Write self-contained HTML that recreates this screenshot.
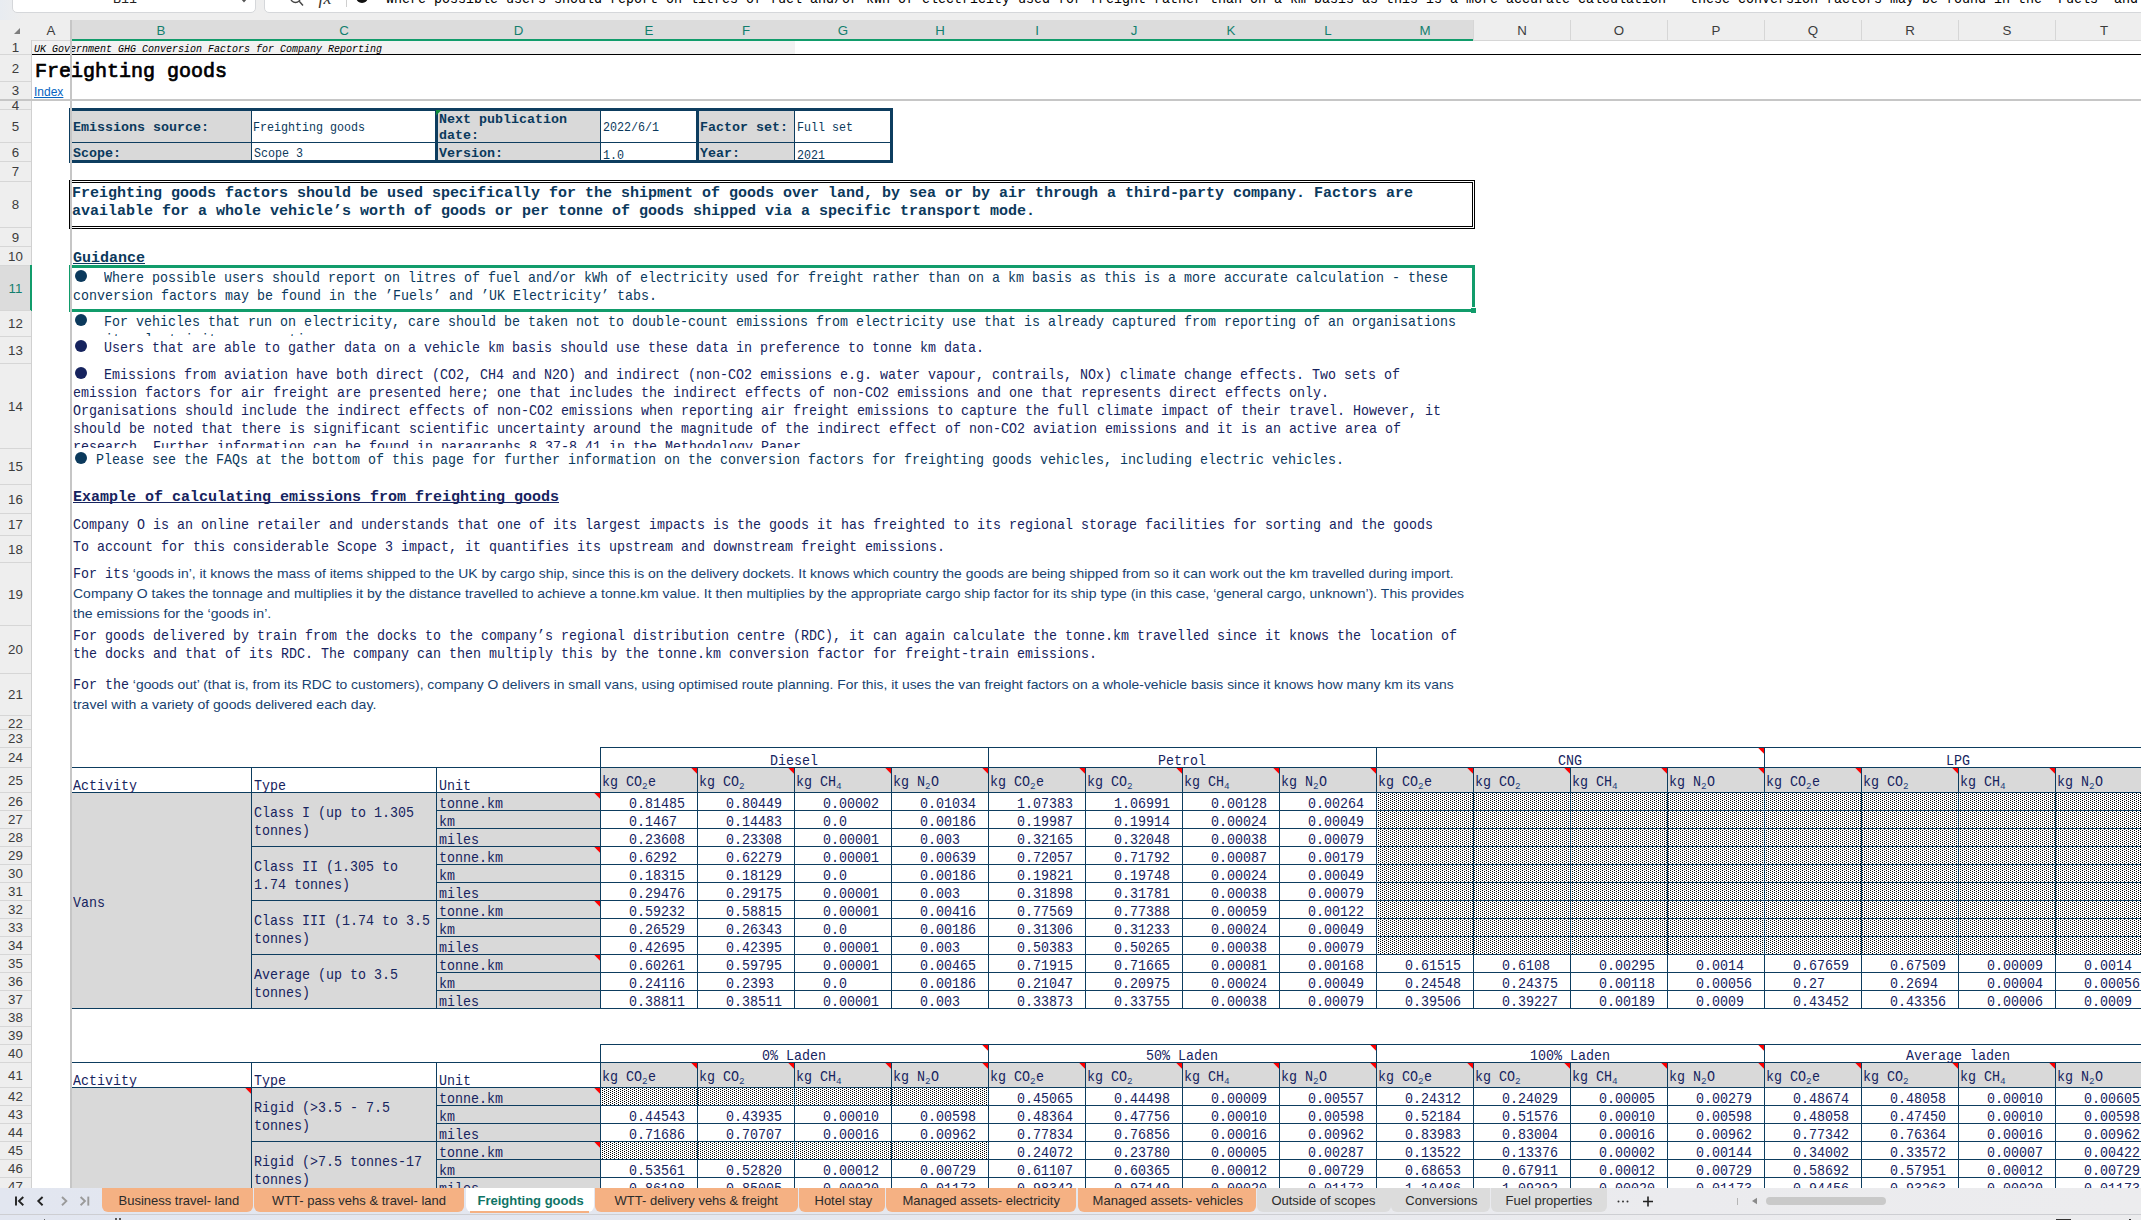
<!DOCTYPE html>
<html><head><meta charset="utf-8"><title>Freighting goods</title>
<style>
html,body{margin:0;padding:0;}
body{width:2141px;height:1220px;overflow:hidden;background:#fff;position:relative;font-family:"Liberation Sans",sans-serif;}
#root{position:absolute;left:0;top:0;width:2141px;height:1220px;overflow:hidden;background:#fff;}
#root div,#root span,#root svg{position:absolute;}
.m{font-family:"Liberation Mono",monospace;white-space:pre;transform-origin:0 0;display:block;}
.s{font-family:"Liberation Sans",sans-serif;white-space:pre;transform-origin:0 0;display:block;}
</style></head><body><div id="root">

<svg width="0" height="0" style="left:0;top:0"><defs><pattern id="dots" width="4" height="2" patternUnits="userSpaceOnUse"><rect width="4" height="2" fill="#fff"/><rect x="2" y="0" width="1" height="1" fill="#000"/><rect x="0" y="1" width="1" height="1" fill="#000"/></pattern></defs></svg>
<div style="left:32px;top:41px;width:763px;height:13px;background:#f2f2f2;"></div>
<div style="left:32px;top:54px;width:2109px;height:1px;background:#000;"></div>
<span class="m " style="left:34.30px;top:44px;font-size:10px;line-height:11px;height:11px;color:#000;transform:scaleX(0.9998);font-style:italic;">UK Government GHG Conversion Factors for Company Reporting</span>
<span class="m " style="left:34.60px;top:60px;font-size:20px;line-height:23px;height:23px;color:#000;transform:scaleX(0.9998);-webkit-text-stroke:0.7px #000;">Freighting goods</span>
<span class="s" style="left:34.00px;top:85px;font-size:12px;line-height:14px;height:14px;color:#0563c1;text-decoration:underline;">Index</span>
<div style="left:72px;top:111px;width:179px;height:49px;background:#d9d9d9;"></div>
<div style="left:438px;top:111px;width:162px;height:49px;background:#d9d9d9;"></div>
<div style="left:699px;top:111px;width:95px;height:49px;background:#d9d9d9;"></div>
<div style="left:69px;top:108px;width:824px;height:3px;background:#0d3d5f;"></div>
<div style="left:69px;top:160px;width:824px;height:3px;background:#0d3d5f;"></div>
<div style="left:69px;top:108px;width:3px;height:55px;background:#0d3d5f;"></div>
<div style="left:435px;top:108px;width:3px;height:55px;background:#0d3d5f;"></div>
<div style="left:696px;top:108px;width:3px;height:55px;background:#0d3d5f;"></div>
<div style="left:890px;top:108px;width:3px;height:55px;background:#0d3d5f;"></div>
<div style="left:251px;top:111px;width:1px;height:49px;background:#0d3d5f;"></div>
<div style="left:600px;top:111px;width:1px;height:49px;background:#0d3d5f;"></div>
<div style="left:794px;top:111px;width:1px;height:49px;background:#0d3d5f;"></div>
<div style="left:72px;top:142px;width:818px;height:1px;background:#0d3d5f;"></div>
<svg style="left:436px;top:110px" width="6" height="6" viewBox="0 0 6 6"><path d="M0 0 H5.6 L0 5.6 Z" fill="#0f8a3c"/></svg>
<span class="m " style="left:72.60px;top:120px;font-size:13.33px;line-height:15px;height:15px;color:#0b395c;transform:scaleX(1.0001);font-weight:bold;">Emissions source:</span>
<span class="m " style="left:72.60px;top:146px;font-size:13.33px;line-height:15px;height:15px;color:#0b395c;transform:scaleX(1.0001);font-weight:bold;">Scope:</span>
<span class="m " style="left:438.60px;top:112px;font-size:13.33px;line-height:15px;height:15px;color:#0b395c;transform:scaleX(1.0001);font-weight:bold;">Next publication</span>
<span class="m " style="left:438.60px;top:128px;font-size:13.33px;line-height:15px;height:15px;color:#0b395c;transform:scaleX(1.0001);font-weight:bold;">date:</span>
<span class="m " style="left:438.60px;top:146px;font-size:13.33px;line-height:15px;height:15px;color:#0b395c;transform:scaleX(1.0001);font-weight:bold;">Version:</span>
<span class="m " style="left:699.60px;top:120px;font-size:13.33px;line-height:15px;height:15px;color:#0b395c;transform:scaleX(1.0001);font-weight:bold;">Factor set:</span>
<span class="m " style="left:699.60px;top:146px;font-size:13.33px;line-height:15px;height:15px;color:#0b395c;transform:scaleX(1.0001);font-weight:bold;">Year:</span>
<span class="m " style="left:253.00px;top:120px;font-size:13px;line-height:15px;height:15px;color:#0b395c;transform:scaleX(0.8973);">Freighting goods</span>
<span class="m " style="left:253.60px;top:146px;font-size:13px;line-height:15px;height:15px;color:#0b395c;transform:scaleX(0.8973);">Scope 3</span>
<span class="m " style="left:602.90px;top:120px;font-size:13px;line-height:15px;height:15px;color:#0b395c;transform:scaleX(0.8973);">2022/6/1</span>
<span class="m " style="left:603.40px;top:148px;font-size:13px;line-height:15px;height:15px;color:#0b395c;transform:scaleX(0.8973);">1.0</span>
<span class="m " style="left:796.60px;top:120px;font-size:13px;line-height:15px;height:15px;color:#0b395c;transform:scaleX(0.8973);">Full set</span>
<span class="m " style="left:796.90px;top:148px;font-size:13px;line-height:15px;height:15px;color:#0b395c;transform:scaleX(0.8973);">2021</span>
<div style="left:69px;top:180px;width:1406px;height:1px;background:#000;"></div>
<div style="left:71px;top:182px;width:1402px;height:1px;background:#000;"></div>
<div style="left:71px;top:226px;width:1402px;height:1px;background:#000;"></div>
<div style="left:69px;top:228px;width:1406px;height:1px;background:#000;"></div>
<div style="left:69px;top:180px;width:1px;height:49px;background:#000;"></div>
<div style="left:71px;top:182px;width:1px;height:45px;background:#000;"></div>
<div style="left:1472px;top:182px;width:1px;height:45px;background:#000;"></div>
<div style="left:1474px;top:180px;width:1px;height:49px;background:#000;"></div>
<span class="m " style="left:72.40px;top:185px;font-size:15px;line-height:17px;height:17px;color:#0b395c;transform:scaleX(0.9998);font-weight:bold;">Freighting goods factors should be used specifically for the shipment of goods over land, by sea or by air through a third-party company. Factors are</span>
<span class="m " style="left:72.40px;top:203px;font-size:15px;line-height:17px;height:17px;color:#0b395c;transform:scaleX(0.9998);font-weight:bold;">available for a whole vehicle’s worth of goods or per tonne of goods shipped via a specific transport mode.</span>
<span class="m " style="left:72.60px;top:250px;font-size:15px;line-height:17px;height:17px;color:#0b395c;transform:scaleX(0.9998);font-weight:bold;">Guidance</span>
<div style="left:72.6px;top:263px;width:72px;height:1px;background:#0b395c;"></div>
<svg style="left:74px;top:269px" width="14" height="14" viewBox="0 0 14 14"><circle cx="7" cy="7" r="6.0" fill="#0b395c"/></svg>
<span class="m " style="left:103.70px;top:270px;font-size:15px;line-height:17px;height:17px;color:#0b395c;transform:scaleX(0.8887);">Where possible users should report on litres of fuel and/or kWh of electricity used for freight rather than on a km basis as this is a more accurate calculation - these</span>
<span class="m " style="left:72.50px;top:288px;font-size:15px;line-height:17px;height:17px;color:#0b395c;transform:scaleX(0.8887);">conversion factors may be found in the ’Fuels’ and ’UK Electricity’ tabs.</span>
<svg style="left:74px;top:313px" width="14" height="14" viewBox="0 0 14 14"><circle cx="7" cy="7" r="6.0" fill="#0b395c"/></svg>
<span class="m " style="left:103.70px;top:314px;font-size:15px;line-height:17px;height:17px;color:#0b395c;transform:scaleX(0.8887);">For vehicles that run on electricity, care should be taken not to double-count emissions from electricity use that is already captured from reporting of an organisations</span>
<div style="left:72px;top:328px;width:1400px;height:8px;overflow:hidden">
<span class="m " style="left:0.50px;top:4px;font-size:15px;line-height:17px;height:17px;color:#0b395c;transform:scaleX(0.8887);">on site electricity consumption.</span>
</div>
<svg style="left:74px;top:339px" width="14" height="14" viewBox="0 0 14 14"><circle cx="7" cy="7" r="6.0" fill="#16235e"/></svg>
<span class="m " style="left:103.70px;top:340px;font-size:15px;line-height:17px;height:17px;color:#16235e;transform:scaleX(0.8887);">Users that are able to gather data on a vehicle km basis should use these data in preference to tonne km data.</span>
<svg style="left:74px;top:366px" width="14" height="14" viewBox="0 0 14 14"><circle cx="7" cy="7" r="6.0" fill="#16235e"/></svg>
<span class="m " style="left:103.70px;top:367px;font-size:15px;line-height:17px;height:17px;color:#16235e;transform:scaleX(0.8887);">Emissions from aviation have both direct (CO2, CH4 and N2O) and indirect (non-CO2 emissions e.g. water vapour, contrails, NOx) climate change effects. Two sets of</span>
<span class="m " style="left:72.50px;top:385px;font-size:15px;line-height:17px;height:17px;color:#16235e;transform:scaleX(0.8887);">emission factors for air freight are presented here; one that includes the indirect effects of non-CO2 emissions and one that represents direct effects only.</span>
<span class="m " style="left:72.50px;top:403px;font-size:15px;line-height:17px;height:17px;color:#16235e;transform:scaleX(0.8887);">Organisations should include the indirect effects of non-CO2 emissions when reporting air freight emissions to capture the full climate impact of their travel. However, it</span>
<span class="m " style="left:72.50px;top:421px;font-size:15px;line-height:17px;height:17px;color:#16235e;transform:scaleX(0.8887);">should be noted that there is significant scientific uncertainty around the magnitude of the indirect effect of non-CO2 aviation emissions and it is an active area of</span>
<div style="left:72px;top:436px;width:1400px;height:12px;overflow:hidden">
<span class="m " style="left:0.50px;top:3px;font-size:15px;line-height:17px;height:17px;color:#16235e;transform:scaleX(0.8887);">research. Further information can be found in paragraphs 8.37-8.41 in the Methodology Paper.</span>
</div>
<svg style="left:74px;top:451px" width="14" height="14" viewBox="0 0 14 14"><circle cx="7" cy="7" r="6.0" fill="#0b395c"/></svg>
<span class="m " style="left:95.70px;top:452px;font-size:15px;line-height:17px;height:17px;color:#0b395c;transform:scaleX(0.8887);">Please see the FAQs at the bottom of this page for further information on the conversion factors for freighting goods vehicles, including electric vehicles.</span>
<span class="m " style="left:72.60px;top:489px;font-size:15px;line-height:17px;height:17px;color:#16235e;transform:scaleX(0.9998);font-weight:bold;">Example of calculating emissions from freighting goods</span>
<div style="left:72.6px;top:502px;width:486px;height:1px;background:#16235e;"></div>
<span class="m " style="left:72.50px;top:517px;font-size:15px;line-height:17px;height:17px;color:#16235e;transform:scaleX(0.8887);">Company O is an online retailer and understands that one of its largest impacts is the goods it has freighted to its regional storage facilities for sorting and the goods</span>
<span class="m " style="left:72.50px;top:539px;font-size:15px;line-height:17px;height:17px;color:#16235e;transform:scaleX(0.8887);">To account for this considerable Scope 3 impact, it quantifies its upstream and downstream freight emissions.</span>
<span class="m " style="left:72.50px;top:566px;font-size:15px;line-height:17px;height:17px;color:#16235e;transform:scaleX(0.8887);">For its</span>
<span class="s" style="left:129.00px;top:566px;font-size:13.5px;line-height:15px;height:15px;color:#17426f;transform:scaleX(1.0324);"> ‘goods in’, it knows the mass of items shipped to the UK by cargo ship, since this is on the delivery dockets. It knows which country the goods are being shipped from so it can work out the km travelled during import.</span>
<span class="s" style="left:72.60px;top:586px;font-size:13.5px;line-height:15px;height:15px;color:#17426f;transform:scaleX(1.0364);">Company O takes the tonnage and multiplies it by the distance travelled to achieve a tonne.km value. It then multiplies by the appropriate cargo ship factor for its ship type (in this case, ‘general cargo, unknown’). This provides</span>
<span class="s" style="left:72.60px;top:606px;font-size:13.5px;line-height:15px;height:15px;color:#17426f;transform:scaleX(1.0482);">the emissions for the ‘goods in’.</span>
<span class="m " style="left:72.50px;top:628px;font-size:15px;line-height:17px;height:17px;color:#16235e;transform:scaleX(0.8887);">For goods delivered by train from the docks to the company’s regional distribution centre (RDC), it can again calculate the tonne.km travelled since it knows the location of</span>
<span class="m " style="left:72.50px;top:646px;font-size:15px;line-height:17px;height:17px;color:#16235e;transform:scaleX(0.8887);">the docks and that of its RDC. The company can then multiply this by the tonne.km conversion factor for freight-train emissions.</span>
<span class="m " style="left:72.50px;top:677px;font-size:15px;line-height:17px;height:17px;color:#16235e;transform:scaleX(0.8887);">For the</span>
<span class="s" style="left:129.00px;top:677px;font-size:13.5px;line-height:15px;height:15px;color:#17426f;transform:scaleX(1.0268);"> ‘goods out’ (that is, from its RDC to customers), company O delivers in small vans, using optimised route planning. For this, it uses the van freight factors on a whole-vehicle basis since it knows how many km its vans</span>
<span class="s" style="left:72.60px;top:697px;font-size:13.5px;line-height:15px;height:15px;color:#17426f;transform:scaleX(1.0427);">travel with a variety of goods delivered each day.</span>
<div style="left:72px;top:793px;width:364px;height:215px;background:#d9d9d9;"></div>
<div style="left:437px;top:793px;width:163px;height:215px;background:#d9d9d9;"></div>
<div style="left:601px;top:768px;width:96px;height:24px;background:#d9d9d9;"></div>
<svg style="left:691px;top:768px" width="6" height="6" viewBox="0 0 6 6"><path d="M0.3 0 H6 V5.7 Z" fill="#ff0000"/></svg>
<div style="left:698px;top:768px;width:96px;height:24px;background:#d9d9d9;"></div>
<svg style="left:788px;top:768px" width="6" height="6" viewBox="0 0 6 6"><path d="M0.3 0 H6 V5.7 Z" fill="#ff0000"/></svg>
<div style="left:795px;top:768px;width:96px;height:24px;background:#d9d9d9;"></div>
<svg style="left:885px;top:768px" width="6" height="6" viewBox="0 0 6 6"><path d="M0.3 0 H6 V5.7 Z" fill="#ff0000"/></svg>
<div style="left:892px;top:768px;width:96px;height:24px;background:#d9d9d9;"></div>
<svg style="left:982px;top:768px" width="6" height="6" viewBox="0 0 6 6"><path d="M0.3 0 H6 V5.7 Z" fill="#ff0000"/></svg>
<div style="left:989px;top:768px;width:96px;height:24px;background:#d9d9d9;"></div>
<svg style="left:1079px;top:768px" width="6" height="6" viewBox="0 0 6 6"><path d="M0.3 0 H6 V5.7 Z" fill="#ff0000"/></svg>
<div style="left:1086px;top:768px;width:96px;height:24px;background:#d9d9d9;"></div>
<svg style="left:1176px;top:768px" width="6" height="6" viewBox="0 0 6 6"><path d="M0.3 0 H6 V5.7 Z" fill="#ff0000"/></svg>
<div style="left:1183px;top:768px;width:96px;height:24px;background:#d9d9d9;"></div>
<svg style="left:1273px;top:768px" width="6" height="6" viewBox="0 0 6 6"><path d="M0.3 0 H6 V5.7 Z" fill="#ff0000"/></svg>
<div style="left:1280px;top:768px;width:96px;height:24px;background:#d9d9d9;"></div>
<svg style="left:1370px;top:768px" width="6" height="6" viewBox="0 0 6 6"><path d="M0.3 0 H6 V5.7 Z" fill="#ff0000"/></svg>
<div style="left:1377px;top:768px;width:96px;height:24px;background:#d9d9d9;"></div>
<svg style="left:1467px;top:768px" width="6" height="6" viewBox="0 0 6 6"><path d="M0.3 0 H6 V5.7 Z" fill="#ff0000"/></svg>
<div style="left:1474px;top:768px;width:96px;height:24px;background:#d9d9d9;"></div>
<svg style="left:1564px;top:768px" width="6" height="6" viewBox="0 0 6 6"><path d="M0.3 0 H6 V5.7 Z" fill="#ff0000"/></svg>
<div style="left:1571px;top:768px;width:96px;height:24px;background:#d9d9d9;"></div>
<svg style="left:1661px;top:768px" width="6" height="6" viewBox="0 0 6 6"><path d="M0.3 0 H6 V5.7 Z" fill="#ff0000"/></svg>
<div style="left:1668px;top:768px;width:96px;height:24px;background:#d9d9d9;"></div>
<svg style="left:1758px;top:768px" width="6" height="6" viewBox="0 0 6 6"><path d="M0.3 0 H6 V5.7 Z" fill="#ff0000"/></svg>
<div style="left:1765px;top:768px;width:96px;height:24px;background:#d9d9d9;"></div>
<svg style="left:1855px;top:768px" width="6" height="6" viewBox="0 0 6 6"><path d="M0.3 0 H6 V5.7 Z" fill="#ff0000"/></svg>
<div style="left:1862px;top:768px;width:96px;height:24px;background:#d9d9d9;"></div>
<svg style="left:1952px;top:768px" width="6" height="6" viewBox="0 0 6 6"><path d="M0.3 0 H6 V5.7 Z" fill="#ff0000"/></svg>
<div style="left:1959px;top:768px;width:96px;height:24px;background:#d9d9d9;"></div>
<svg style="left:2049px;top:768px" width="6" height="6" viewBox="0 0 6 6"><path d="M0.3 0 H6 V5.7 Z" fill="#ff0000"/></svg>
<div style="left:2056px;top:768px;width:96px;height:24px;background:#d9d9d9;"></div>
<svg style="left:2146px;top:768px" width="6" height="6" viewBox="0 0 6 6"><path d="M0.3 0 H6 V5.7 Z" fill="#ff0000"/></svg>
<svg shape-rendering="crispEdges" style="left:1376px;top:792px" width="765" height="163" viewBox="0 0 765 163"><rect x="1" y="1" width="764" height="162" fill="url(#dots)"/></svg>
<div style="left:600px;top:747px;width:1541px;height:1px;background:#0d3d5f;"></div>
<div style="left:72px;top:767px;width:2069px;height:1px;background:#0d3d5f;"></div>
<div style="left:72px;top:792px;width:2069px;height:1px;background:#0d3d5f;"></div>
<div style="left:437px;top:810px;width:1704px;height:1px;background:#0d3d5f;"></div>
<div style="left:437px;top:828px;width:1704px;height:1px;background:#0d3d5f;"></div>
<div style="left:252px;top:846px;width:1889px;height:1px;background:#0d3d5f;"></div>
<div style="left:437px;top:864px;width:1704px;height:1px;background:#0d3d5f;"></div>
<div style="left:437px;top:882px;width:1704px;height:1px;background:#0d3d5f;"></div>
<div style="left:252px;top:900px;width:1889px;height:1px;background:#0d3d5f;"></div>
<div style="left:437px;top:918px;width:1704px;height:1px;background:#0d3d5f;"></div>
<div style="left:437px;top:936px;width:1704px;height:1px;background:#0d3d5f;"></div>
<div style="left:252px;top:954px;width:1889px;height:1px;background:#0d3d5f;"></div>
<div style="left:437px;top:972px;width:1704px;height:1px;background:#0d3d5f;"></div>
<div style="left:437px;top:990px;width:1704px;height:1px;background:#0d3d5f;"></div>
<div style="left:252px;top:1008px;width:1889px;height:1px;background:#0d3d5f;"></div>
<div style="left:72px;top:1008px;width:2069px;height:1px;background:#0d3d5f;"></div>
<div style="left:600px;top:747px;width:1px;height:262px;background:#0d3d5f;"></div>
<div style="left:988px;top:747px;width:1px;height:262px;background:#0d3d5f;"></div>
<div style="left:1376px;top:747px;width:1px;height:262px;background:#0d3d5f;"></div>
<div style="left:1764px;top:747px;width:1px;height:262px;background:#0d3d5f;"></div>
<div style="left:697px;top:767px;width:1px;height:242px;background:#0d3d5f;"></div>
<div style="left:794px;top:767px;width:1px;height:242px;background:#0d3d5f;"></div>
<div style="left:891px;top:767px;width:1px;height:242px;background:#0d3d5f;"></div>
<div style="left:1085px;top:767px;width:1px;height:242px;background:#0d3d5f;"></div>
<div style="left:1182px;top:767px;width:1px;height:242px;background:#0d3d5f;"></div>
<div style="left:1279px;top:767px;width:1px;height:242px;background:#0d3d5f;"></div>
<div style="left:1473px;top:767px;width:1px;height:242px;background:#0d3d5f;"></div>
<div style="left:1570px;top:767px;width:1px;height:242px;background:#0d3d5f;"></div>
<div style="left:1667px;top:767px;width:1px;height:242px;background:#0d3d5f;"></div>
<div style="left:1861px;top:767px;width:1px;height:242px;background:#0d3d5f;"></div>
<div style="left:1958px;top:767px;width:1px;height:242px;background:#0d3d5f;"></div>
<div style="left:2055px;top:767px;width:1px;height:242px;background:#0d3d5f;"></div>
<div style="left:251px;top:767px;width:1px;height:242px;background:#0d3d5f;"></div>
<div style="left:436px;top:767px;width:1px;height:242px;background:#0d3d5f;"></div>
<span class="m " style="left:600.00px;top:753px;font-size:15px;line-height:17px;height:17px;color:#16235e;transform:scaleX(0.8887);width:436.57px;text-align:center;transform-origin:0 0;">Diesel</span>
<span class="m " style="left:988.00px;top:753px;font-size:15px;line-height:17px;height:17px;color:#16235e;transform:scaleX(0.8887);width:436.57px;text-align:center;transform-origin:0 0;">Petrol</span>
<span class="m " style="left:1376.00px;top:753px;font-size:15px;line-height:17px;height:17px;color:#16235e;transform:scaleX(0.8887);width:436.57px;text-align:center;transform-origin:0 0;">CNG</span>
<span class="m " style="left:1764.00px;top:753px;font-size:15px;line-height:17px;height:17px;color:#16235e;transform:scaleX(0.8887);width:436.57px;text-align:center;transform-origin:0 0;">LPG</span>
<svg style="left:1758px;top:748px" width="6" height="6" viewBox="0 0 6 6"><path d="M0.3 0 H6 V5.7 Z" fill="#ff0000"/></svg>
<span class="m " style="left:73.30px;top:778px;font-size:15px;line-height:17px;height:17px;color:#16235e;transform:scaleX(0.8887);">Activity</span>
<span class="m " style="left:253.60px;top:778px;font-size:15px;line-height:17px;height:17px;color:#16235e;transform:scaleX(0.8887);">Type</span>
<span class="m " style="left:438.60px;top:778px;font-size:15px;line-height:17px;height:17px;color:#16235e;transform:scaleX(0.8887);">Unit</span>
<span class="m " style="left:602.00px;top:774px;font-size:15px;line-height:17px;height:17px;color:#16235e;transform:scaleX(0.8887);">kg CO</span>
<span class="m " style="left:642.30px;top:781px;font-size:9.6px;line-height:11px;height:11px;color:#1f3f7a;transform:scaleX(0.9721);">2</span>
<span class="m " style="left:648.00px;top:774px;font-size:15px;line-height:17px;height:17px;color:#16235e;transform:scaleX(0.8887);">e</span>
<span class="m " style="left:699.00px;top:774px;font-size:15px;line-height:17px;height:17px;color:#16235e;transform:scaleX(0.8887);">kg CO</span>
<span class="m " style="left:739.30px;top:781px;font-size:9.6px;line-height:11px;height:11px;color:#1f3f7a;transform:scaleX(0.9721);">2</span>
<span class="m " style="left:796.00px;top:774px;font-size:15px;line-height:17px;height:17px;color:#16235e;transform:scaleX(0.8887);">kg CH</span>
<span class="m " style="left:836.30px;top:781px;font-size:9.6px;line-height:11px;height:11px;color:#1f3f7a;transform:scaleX(0.9721);">4</span>
<span class="m " style="left:893.00px;top:774px;font-size:15px;line-height:17px;height:17px;color:#16235e;transform:scaleX(0.8887);">kg N</span>
<span class="m " style="left:925.30px;top:781px;font-size:9.6px;line-height:11px;height:11px;color:#1f3f7a;transform:scaleX(0.9721);">2</span>
<span class="m " style="left:931.00px;top:774px;font-size:15px;line-height:17px;height:17px;color:#16235e;transform:scaleX(0.8887);">O</span>
<span class="m " style="left:990.00px;top:774px;font-size:15px;line-height:17px;height:17px;color:#16235e;transform:scaleX(0.8887);">kg CO</span>
<span class="m " style="left:1030.30px;top:781px;font-size:9.6px;line-height:11px;height:11px;color:#1f3f7a;transform:scaleX(0.9721);">2</span>
<span class="m " style="left:1036.00px;top:774px;font-size:15px;line-height:17px;height:17px;color:#16235e;transform:scaleX(0.8887);">e</span>
<span class="m " style="left:1087.00px;top:774px;font-size:15px;line-height:17px;height:17px;color:#16235e;transform:scaleX(0.8887);">kg CO</span>
<span class="m " style="left:1127.30px;top:781px;font-size:9.6px;line-height:11px;height:11px;color:#1f3f7a;transform:scaleX(0.9721);">2</span>
<span class="m " style="left:1184.00px;top:774px;font-size:15px;line-height:17px;height:17px;color:#16235e;transform:scaleX(0.8887);">kg CH</span>
<span class="m " style="left:1224.30px;top:781px;font-size:9.6px;line-height:11px;height:11px;color:#1f3f7a;transform:scaleX(0.9721);">4</span>
<span class="m " style="left:1281.00px;top:774px;font-size:15px;line-height:17px;height:17px;color:#16235e;transform:scaleX(0.8887);">kg N</span>
<span class="m " style="left:1313.30px;top:781px;font-size:9.6px;line-height:11px;height:11px;color:#1f3f7a;transform:scaleX(0.9721);">2</span>
<span class="m " style="left:1319.00px;top:774px;font-size:15px;line-height:17px;height:17px;color:#16235e;transform:scaleX(0.8887);">O</span>
<span class="m " style="left:1378.00px;top:774px;font-size:15px;line-height:17px;height:17px;color:#16235e;transform:scaleX(0.8887);">kg CO</span>
<span class="m " style="left:1418.30px;top:781px;font-size:9.6px;line-height:11px;height:11px;color:#1f3f7a;transform:scaleX(0.9721);">2</span>
<span class="m " style="left:1424.00px;top:774px;font-size:15px;line-height:17px;height:17px;color:#16235e;transform:scaleX(0.8887);">e</span>
<span class="m " style="left:1475.00px;top:774px;font-size:15px;line-height:17px;height:17px;color:#16235e;transform:scaleX(0.8887);">kg CO</span>
<span class="m " style="left:1515.30px;top:781px;font-size:9.6px;line-height:11px;height:11px;color:#1f3f7a;transform:scaleX(0.9721);">2</span>
<span class="m " style="left:1572.00px;top:774px;font-size:15px;line-height:17px;height:17px;color:#16235e;transform:scaleX(0.8887);">kg CH</span>
<span class="m " style="left:1612.30px;top:781px;font-size:9.6px;line-height:11px;height:11px;color:#1f3f7a;transform:scaleX(0.9721);">4</span>
<span class="m " style="left:1669.00px;top:774px;font-size:15px;line-height:17px;height:17px;color:#16235e;transform:scaleX(0.8887);">kg N</span>
<span class="m " style="left:1701.30px;top:781px;font-size:9.6px;line-height:11px;height:11px;color:#1f3f7a;transform:scaleX(0.9721);">2</span>
<span class="m " style="left:1707.00px;top:774px;font-size:15px;line-height:17px;height:17px;color:#16235e;transform:scaleX(0.8887);">O</span>
<span class="m " style="left:1766.00px;top:774px;font-size:15px;line-height:17px;height:17px;color:#16235e;transform:scaleX(0.8887);">kg CO</span>
<span class="m " style="left:1806.30px;top:781px;font-size:9.6px;line-height:11px;height:11px;color:#1f3f7a;transform:scaleX(0.9721);">2</span>
<span class="m " style="left:1812.00px;top:774px;font-size:15px;line-height:17px;height:17px;color:#16235e;transform:scaleX(0.8887);">e</span>
<span class="m " style="left:1863.00px;top:774px;font-size:15px;line-height:17px;height:17px;color:#16235e;transform:scaleX(0.8887);">kg CO</span>
<span class="m " style="left:1903.30px;top:781px;font-size:9.6px;line-height:11px;height:11px;color:#1f3f7a;transform:scaleX(0.9721);">2</span>
<span class="m " style="left:1960.00px;top:774px;font-size:15px;line-height:17px;height:17px;color:#16235e;transform:scaleX(0.8887);">kg CH</span>
<span class="m " style="left:2000.30px;top:781px;font-size:9.6px;line-height:11px;height:11px;color:#1f3f7a;transform:scaleX(0.9721);">4</span>
<span class="m " style="left:2057.00px;top:774px;font-size:15px;line-height:17px;height:17px;color:#16235e;transform:scaleX(0.8887);">kg N</span>
<span class="m " style="left:2089.30px;top:781px;font-size:9.6px;line-height:11px;height:11px;color:#1f3f7a;transform:scaleX(0.9721);">2</span>
<span class="m " style="left:2095.00px;top:774px;font-size:15px;line-height:17px;height:17px;color:#16235e;transform:scaleX(0.8887);">O</span>
<span class="m " style="left:73.30px;top:895px;font-size:15px;line-height:17px;height:17px;color:#16235e;transform:scaleX(0.8887);">Vans</span>
<span class="m " style="left:253.60px;top:805px;font-size:15px;line-height:17px;height:17px;color:#16235e;transform:scaleX(0.8887);">Class I (up to 1.305</span>
<span class="m " style="left:253.60px;top:823px;font-size:15px;line-height:17px;height:17px;color:#16235e;transform:scaleX(0.8887);">tonnes)</span>
<span class="m " style="left:253.60px;top:859px;font-size:15px;line-height:17px;height:17px;color:#16235e;transform:scaleX(0.8887);">Class II (1.305 to</span>
<span class="m " style="left:253.60px;top:877px;font-size:15px;line-height:17px;height:17px;color:#16235e;transform:scaleX(0.8887);">1.74 tonnes)</span>
<span class="m " style="left:253.60px;top:913px;font-size:15px;line-height:17px;height:17px;color:#16235e;transform:scaleX(0.8887);">Class III (1.74 to 3.5</span>
<span class="m " style="left:253.60px;top:931px;font-size:15px;line-height:17px;height:17px;color:#16235e;transform:scaleX(0.8887);">tonnes)</span>
<span class="m " style="left:253.60px;top:967px;font-size:15px;line-height:17px;height:17px;color:#16235e;transform:scaleX(0.8887);">Average (up to 3.5</span>
<span class="m " style="left:253.60px;top:985px;font-size:15px;line-height:17px;height:17px;color:#16235e;transform:scaleX(0.8887);">tonnes)</span>
<span class="m " style="left:438.60px;top:796px;font-size:15px;line-height:17px;height:17px;color:#16235e;transform:scaleX(0.8887);">tonne.km</span>
<svg style="left:594px;top:793px" width="6" height="6" viewBox="0 0 6 6"><path d="M0.3 0 H6 V5.7 Z" fill="#ff0000"/></svg>
<span class="m " style="left:629.10px;top:796px;font-size:15px;line-height:17px;height:17px;color:#16235e;transform:scaleX(0.8887);">0.81485</span>
<span class="m " style="left:726.10px;top:796px;font-size:15px;line-height:17px;height:17px;color:#16235e;transform:scaleX(0.8887);">0.80449</span>
<span class="m " style="left:823.10px;top:796px;font-size:15px;line-height:17px;height:17px;color:#16235e;transform:scaleX(0.8887);">0.00002</span>
<span class="m " style="left:920.10px;top:796px;font-size:15px;line-height:17px;height:17px;color:#16235e;transform:scaleX(0.8887);">0.01034</span>
<span class="m " style="left:1017.10px;top:796px;font-size:15px;line-height:17px;height:17px;color:#16235e;transform:scaleX(0.8887);">1.07383</span>
<span class="m " style="left:1114.10px;top:796px;font-size:15px;line-height:17px;height:17px;color:#16235e;transform:scaleX(0.8887);">1.06991</span>
<span class="m " style="left:1211.10px;top:796px;font-size:15px;line-height:17px;height:17px;color:#16235e;transform:scaleX(0.8887);">0.00128</span>
<span class="m " style="left:1308.10px;top:796px;font-size:15px;line-height:17px;height:17px;color:#16235e;transform:scaleX(0.8887);">0.00264</span>
<span class="m " style="left:438.60px;top:814px;font-size:15px;line-height:17px;height:17px;color:#16235e;transform:scaleX(0.8887);">km</span>
<span class="m " style="left:629.10px;top:814px;font-size:15px;line-height:17px;height:17px;color:#16235e;transform:scaleX(0.8887);">0.1467</span>
<span class="m " style="left:726.10px;top:814px;font-size:15px;line-height:17px;height:17px;color:#16235e;transform:scaleX(0.8887);">0.14483</span>
<span class="m " style="left:823.10px;top:814px;font-size:15px;line-height:17px;height:17px;color:#16235e;transform:scaleX(0.8887);">0.0</span>
<span class="m " style="left:920.10px;top:814px;font-size:15px;line-height:17px;height:17px;color:#16235e;transform:scaleX(0.8887);">0.00186</span>
<span class="m " style="left:1017.10px;top:814px;font-size:15px;line-height:17px;height:17px;color:#16235e;transform:scaleX(0.8887);">0.19987</span>
<span class="m " style="left:1114.10px;top:814px;font-size:15px;line-height:17px;height:17px;color:#16235e;transform:scaleX(0.8887);">0.19914</span>
<span class="m " style="left:1211.10px;top:814px;font-size:15px;line-height:17px;height:17px;color:#16235e;transform:scaleX(0.8887);">0.00024</span>
<span class="m " style="left:1308.10px;top:814px;font-size:15px;line-height:17px;height:17px;color:#16235e;transform:scaleX(0.8887);">0.00049</span>
<span class="m " style="left:438.60px;top:832px;font-size:15px;line-height:17px;height:17px;color:#16235e;transform:scaleX(0.8887);">miles</span>
<span class="m " style="left:629.10px;top:832px;font-size:15px;line-height:17px;height:17px;color:#16235e;transform:scaleX(0.8887);">0.23608</span>
<span class="m " style="left:726.10px;top:832px;font-size:15px;line-height:17px;height:17px;color:#16235e;transform:scaleX(0.8887);">0.23308</span>
<span class="m " style="left:823.10px;top:832px;font-size:15px;line-height:17px;height:17px;color:#16235e;transform:scaleX(0.8887);">0.00001</span>
<span class="m " style="left:920.10px;top:832px;font-size:15px;line-height:17px;height:17px;color:#16235e;transform:scaleX(0.8887);">0.003</span>
<span class="m " style="left:1017.10px;top:832px;font-size:15px;line-height:17px;height:17px;color:#16235e;transform:scaleX(0.8887);">0.32165</span>
<span class="m " style="left:1114.10px;top:832px;font-size:15px;line-height:17px;height:17px;color:#16235e;transform:scaleX(0.8887);">0.32048</span>
<span class="m " style="left:1211.10px;top:832px;font-size:15px;line-height:17px;height:17px;color:#16235e;transform:scaleX(0.8887);">0.00038</span>
<span class="m " style="left:1308.10px;top:832px;font-size:15px;line-height:17px;height:17px;color:#16235e;transform:scaleX(0.8887);">0.00079</span>
<span class="m " style="left:438.60px;top:850px;font-size:15px;line-height:17px;height:17px;color:#16235e;transform:scaleX(0.8887);">tonne.km</span>
<svg style="left:594px;top:847px" width="6" height="6" viewBox="0 0 6 6"><path d="M0.3 0 H6 V5.7 Z" fill="#ff0000"/></svg>
<span class="m " style="left:629.10px;top:850px;font-size:15px;line-height:17px;height:17px;color:#16235e;transform:scaleX(0.8887);">0.6292</span>
<span class="m " style="left:726.10px;top:850px;font-size:15px;line-height:17px;height:17px;color:#16235e;transform:scaleX(0.8887);">0.62279</span>
<span class="m " style="left:823.10px;top:850px;font-size:15px;line-height:17px;height:17px;color:#16235e;transform:scaleX(0.8887);">0.00001</span>
<span class="m " style="left:920.10px;top:850px;font-size:15px;line-height:17px;height:17px;color:#16235e;transform:scaleX(0.8887);">0.00639</span>
<span class="m " style="left:1017.10px;top:850px;font-size:15px;line-height:17px;height:17px;color:#16235e;transform:scaleX(0.8887);">0.72057</span>
<span class="m " style="left:1114.10px;top:850px;font-size:15px;line-height:17px;height:17px;color:#16235e;transform:scaleX(0.8887);">0.71792</span>
<span class="m " style="left:1211.10px;top:850px;font-size:15px;line-height:17px;height:17px;color:#16235e;transform:scaleX(0.8887);">0.00087</span>
<span class="m " style="left:1308.10px;top:850px;font-size:15px;line-height:17px;height:17px;color:#16235e;transform:scaleX(0.8887);">0.00179</span>
<span class="m " style="left:438.60px;top:868px;font-size:15px;line-height:17px;height:17px;color:#16235e;transform:scaleX(0.8887);">km</span>
<span class="m " style="left:629.10px;top:868px;font-size:15px;line-height:17px;height:17px;color:#16235e;transform:scaleX(0.8887);">0.18315</span>
<span class="m " style="left:726.10px;top:868px;font-size:15px;line-height:17px;height:17px;color:#16235e;transform:scaleX(0.8887);">0.18129</span>
<span class="m " style="left:823.10px;top:868px;font-size:15px;line-height:17px;height:17px;color:#16235e;transform:scaleX(0.8887);">0.0</span>
<span class="m " style="left:920.10px;top:868px;font-size:15px;line-height:17px;height:17px;color:#16235e;transform:scaleX(0.8887);">0.00186</span>
<span class="m " style="left:1017.10px;top:868px;font-size:15px;line-height:17px;height:17px;color:#16235e;transform:scaleX(0.8887);">0.19821</span>
<span class="m " style="left:1114.10px;top:868px;font-size:15px;line-height:17px;height:17px;color:#16235e;transform:scaleX(0.8887);">0.19748</span>
<span class="m " style="left:1211.10px;top:868px;font-size:15px;line-height:17px;height:17px;color:#16235e;transform:scaleX(0.8887);">0.00024</span>
<span class="m " style="left:1308.10px;top:868px;font-size:15px;line-height:17px;height:17px;color:#16235e;transform:scaleX(0.8887);">0.00049</span>
<span class="m " style="left:438.60px;top:886px;font-size:15px;line-height:17px;height:17px;color:#16235e;transform:scaleX(0.8887);">miles</span>
<span class="m " style="left:629.10px;top:886px;font-size:15px;line-height:17px;height:17px;color:#16235e;transform:scaleX(0.8887);">0.29476</span>
<span class="m " style="left:726.10px;top:886px;font-size:15px;line-height:17px;height:17px;color:#16235e;transform:scaleX(0.8887);">0.29175</span>
<span class="m " style="left:823.10px;top:886px;font-size:15px;line-height:17px;height:17px;color:#16235e;transform:scaleX(0.8887);">0.00001</span>
<span class="m " style="left:920.10px;top:886px;font-size:15px;line-height:17px;height:17px;color:#16235e;transform:scaleX(0.8887);">0.003</span>
<span class="m " style="left:1017.10px;top:886px;font-size:15px;line-height:17px;height:17px;color:#16235e;transform:scaleX(0.8887);">0.31898</span>
<span class="m " style="left:1114.10px;top:886px;font-size:15px;line-height:17px;height:17px;color:#16235e;transform:scaleX(0.8887);">0.31781</span>
<span class="m " style="left:1211.10px;top:886px;font-size:15px;line-height:17px;height:17px;color:#16235e;transform:scaleX(0.8887);">0.00038</span>
<span class="m " style="left:1308.10px;top:886px;font-size:15px;line-height:17px;height:17px;color:#16235e;transform:scaleX(0.8887);">0.00079</span>
<span class="m " style="left:438.60px;top:904px;font-size:15px;line-height:17px;height:17px;color:#16235e;transform:scaleX(0.8887);">tonne.km</span>
<svg style="left:594px;top:901px" width="6" height="6" viewBox="0 0 6 6"><path d="M0.3 0 H6 V5.7 Z" fill="#ff0000"/></svg>
<span class="m " style="left:629.10px;top:904px;font-size:15px;line-height:17px;height:17px;color:#16235e;transform:scaleX(0.8887);">0.59232</span>
<span class="m " style="left:726.10px;top:904px;font-size:15px;line-height:17px;height:17px;color:#16235e;transform:scaleX(0.8887);">0.58815</span>
<span class="m " style="left:823.10px;top:904px;font-size:15px;line-height:17px;height:17px;color:#16235e;transform:scaleX(0.8887);">0.00001</span>
<span class="m " style="left:920.10px;top:904px;font-size:15px;line-height:17px;height:17px;color:#16235e;transform:scaleX(0.8887);">0.00416</span>
<span class="m " style="left:1017.10px;top:904px;font-size:15px;line-height:17px;height:17px;color:#16235e;transform:scaleX(0.8887);">0.77569</span>
<span class="m " style="left:1114.10px;top:904px;font-size:15px;line-height:17px;height:17px;color:#16235e;transform:scaleX(0.8887);">0.77388</span>
<span class="m " style="left:1211.10px;top:904px;font-size:15px;line-height:17px;height:17px;color:#16235e;transform:scaleX(0.8887);">0.00059</span>
<span class="m " style="left:1308.10px;top:904px;font-size:15px;line-height:17px;height:17px;color:#16235e;transform:scaleX(0.8887);">0.00122</span>
<span class="m " style="left:438.60px;top:922px;font-size:15px;line-height:17px;height:17px;color:#16235e;transform:scaleX(0.8887);">km</span>
<span class="m " style="left:629.10px;top:922px;font-size:15px;line-height:17px;height:17px;color:#16235e;transform:scaleX(0.8887);">0.26529</span>
<span class="m " style="left:726.10px;top:922px;font-size:15px;line-height:17px;height:17px;color:#16235e;transform:scaleX(0.8887);">0.26343</span>
<span class="m " style="left:823.10px;top:922px;font-size:15px;line-height:17px;height:17px;color:#16235e;transform:scaleX(0.8887);">0.0</span>
<span class="m " style="left:920.10px;top:922px;font-size:15px;line-height:17px;height:17px;color:#16235e;transform:scaleX(0.8887);">0.00186</span>
<span class="m " style="left:1017.10px;top:922px;font-size:15px;line-height:17px;height:17px;color:#16235e;transform:scaleX(0.8887);">0.31306</span>
<span class="m " style="left:1114.10px;top:922px;font-size:15px;line-height:17px;height:17px;color:#16235e;transform:scaleX(0.8887);">0.31233</span>
<span class="m " style="left:1211.10px;top:922px;font-size:15px;line-height:17px;height:17px;color:#16235e;transform:scaleX(0.8887);">0.00024</span>
<span class="m " style="left:1308.10px;top:922px;font-size:15px;line-height:17px;height:17px;color:#16235e;transform:scaleX(0.8887);">0.00049</span>
<span class="m " style="left:438.60px;top:940px;font-size:15px;line-height:17px;height:17px;color:#16235e;transform:scaleX(0.8887);">miles</span>
<span class="m " style="left:629.10px;top:940px;font-size:15px;line-height:17px;height:17px;color:#16235e;transform:scaleX(0.8887);">0.42695</span>
<span class="m " style="left:726.10px;top:940px;font-size:15px;line-height:17px;height:17px;color:#16235e;transform:scaleX(0.8887);">0.42395</span>
<span class="m " style="left:823.10px;top:940px;font-size:15px;line-height:17px;height:17px;color:#16235e;transform:scaleX(0.8887);">0.00001</span>
<span class="m " style="left:920.10px;top:940px;font-size:15px;line-height:17px;height:17px;color:#16235e;transform:scaleX(0.8887);">0.003</span>
<span class="m " style="left:1017.10px;top:940px;font-size:15px;line-height:17px;height:17px;color:#16235e;transform:scaleX(0.8887);">0.50383</span>
<span class="m " style="left:1114.10px;top:940px;font-size:15px;line-height:17px;height:17px;color:#16235e;transform:scaleX(0.8887);">0.50265</span>
<span class="m " style="left:1211.10px;top:940px;font-size:15px;line-height:17px;height:17px;color:#16235e;transform:scaleX(0.8887);">0.00038</span>
<span class="m " style="left:1308.10px;top:940px;font-size:15px;line-height:17px;height:17px;color:#16235e;transform:scaleX(0.8887);">0.00079</span>
<span class="m " style="left:438.60px;top:958px;font-size:15px;line-height:17px;height:17px;color:#16235e;transform:scaleX(0.8887);">tonne.km</span>
<svg style="left:594px;top:955px" width="6" height="6" viewBox="0 0 6 6"><path d="M0.3 0 H6 V5.7 Z" fill="#ff0000"/></svg>
<span class="m " style="left:629.10px;top:958px;font-size:15px;line-height:17px;height:17px;color:#16235e;transform:scaleX(0.8887);">0.60261</span>
<span class="m " style="left:726.10px;top:958px;font-size:15px;line-height:17px;height:17px;color:#16235e;transform:scaleX(0.8887);">0.59795</span>
<span class="m " style="left:823.10px;top:958px;font-size:15px;line-height:17px;height:17px;color:#16235e;transform:scaleX(0.8887);">0.00001</span>
<span class="m " style="left:920.10px;top:958px;font-size:15px;line-height:17px;height:17px;color:#16235e;transform:scaleX(0.8887);">0.00465</span>
<span class="m " style="left:1017.10px;top:958px;font-size:15px;line-height:17px;height:17px;color:#16235e;transform:scaleX(0.8887);">0.71915</span>
<span class="m " style="left:1114.10px;top:958px;font-size:15px;line-height:17px;height:17px;color:#16235e;transform:scaleX(0.8887);">0.71665</span>
<span class="m " style="left:1211.10px;top:958px;font-size:15px;line-height:17px;height:17px;color:#16235e;transform:scaleX(0.8887);">0.00081</span>
<span class="m " style="left:1308.10px;top:958px;font-size:15px;line-height:17px;height:17px;color:#16235e;transform:scaleX(0.8887);">0.00168</span>
<span class="m " style="left:1405.10px;top:958px;font-size:15px;line-height:17px;height:17px;color:#16235e;transform:scaleX(0.8887);">0.61515</span>
<span class="m " style="left:1502.10px;top:958px;font-size:15px;line-height:17px;height:17px;color:#16235e;transform:scaleX(0.8887);">0.6108</span>
<span class="m " style="left:1599.10px;top:958px;font-size:15px;line-height:17px;height:17px;color:#16235e;transform:scaleX(0.8887);">0.00295</span>
<span class="m " style="left:1696.10px;top:958px;font-size:15px;line-height:17px;height:17px;color:#16235e;transform:scaleX(0.8887);">0.0014</span>
<span class="m " style="left:1793.10px;top:958px;font-size:15px;line-height:17px;height:17px;color:#16235e;transform:scaleX(0.8887);">0.67659</span>
<span class="m " style="left:1890.10px;top:958px;font-size:15px;line-height:17px;height:17px;color:#16235e;transform:scaleX(0.8887);">0.67509</span>
<span class="m " style="left:1987.10px;top:958px;font-size:15px;line-height:17px;height:17px;color:#16235e;transform:scaleX(0.8887);">0.00009</span>
<span class="m " style="left:2084.10px;top:958px;font-size:15px;line-height:17px;height:17px;color:#16235e;transform:scaleX(0.8887);">0.0014</span>
<span class="m " style="left:438.60px;top:976px;font-size:15px;line-height:17px;height:17px;color:#16235e;transform:scaleX(0.8887);">km</span>
<span class="m " style="left:629.10px;top:976px;font-size:15px;line-height:17px;height:17px;color:#16235e;transform:scaleX(0.8887);">0.24116</span>
<span class="m " style="left:726.10px;top:976px;font-size:15px;line-height:17px;height:17px;color:#16235e;transform:scaleX(0.8887);">0.2393</span>
<span class="m " style="left:823.10px;top:976px;font-size:15px;line-height:17px;height:17px;color:#16235e;transform:scaleX(0.8887);">0.0</span>
<span class="m " style="left:920.10px;top:976px;font-size:15px;line-height:17px;height:17px;color:#16235e;transform:scaleX(0.8887);">0.00186</span>
<span class="m " style="left:1017.10px;top:976px;font-size:15px;line-height:17px;height:17px;color:#16235e;transform:scaleX(0.8887);">0.21047</span>
<span class="m " style="left:1114.10px;top:976px;font-size:15px;line-height:17px;height:17px;color:#16235e;transform:scaleX(0.8887);">0.20975</span>
<span class="m " style="left:1211.10px;top:976px;font-size:15px;line-height:17px;height:17px;color:#16235e;transform:scaleX(0.8887);">0.00024</span>
<span class="m " style="left:1308.10px;top:976px;font-size:15px;line-height:17px;height:17px;color:#16235e;transform:scaleX(0.8887);">0.00049</span>
<span class="m " style="left:1405.10px;top:976px;font-size:15px;line-height:17px;height:17px;color:#16235e;transform:scaleX(0.8887);">0.24548</span>
<span class="m " style="left:1502.10px;top:976px;font-size:15px;line-height:17px;height:17px;color:#16235e;transform:scaleX(0.8887);">0.24375</span>
<span class="m " style="left:1599.10px;top:976px;font-size:15px;line-height:17px;height:17px;color:#16235e;transform:scaleX(0.8887);">0.00118</span>
<span class="m " style="left:1696.10px;top:976px;font-size:15px;line-height:17px;height:17px;color:#16235e;transform:scaleX(0.8887);">0.00056</span>
<span class="m " style="left:1793.10px;top:976px;font-size:15px;line-height:17px;height:17px;color:#16235e;transform:scaleX(0.8887);">0.27</span>
<span class="m " style="left:1890.10px;top:976px;font-size:15px;line-height:17px;height:17px;color:#16235e;transform:scaleX(0.8887);">0.2694</span>
<span class="m " style="left:1987.10px;top:976px;font-size:15px;line-height:17px;height:17px;color:#16235e;transform:scaleX(0.8887);">0.00004</span>
<span class="m " style="left:2084.10px;top:976px;font-size:15px;line-height:17px;height:17px;color:#16235e;transform:scaleX(0.8887);">0.00056</span>
<span class="m " style="left:438.60px;top:994px;font-size:15px;line-height:17px;height:17px;color:#16235e;transform:scaleX(0.8887);">miles</span>
<span class="m " style="left:629.10px;top:994px;font-size:15px;line-height:17px;height:17px;color:#16235e;transform:scaleX(0.8887);">0.38811</span>
<span class="m " style="left:726.10px;top:994px;font-size:15px;line-height:17px;height:17px;color:#16235e;transform:scaleX(0.8887);">0.38511</span>
<span class="m " style="left:823.10px;top:994px;font-size:15px;line-height:17px;height:17px;color:#16235e;transform:scaleX(0.8887);">0.00001</span>
<span class="m " style="left:920.10px;top:994px;font-size:15px;line-height:17px;height:17px;color:#16235e;transform:scaleX(0.8887);">0.003</span>
<span class="m " style="left:1017.10px;top:994px;font-size:15px;line-height:17px;height:17px;color:#16235e;transform:scaleX(0.8887);">0.33873</span>
<span class="m " style="left:1114.10px;top:994px;font-size:15px;line-height:17px;height:17px;color:#16235e;transform:scaleX(0.8887);">0.33755</span>
<span class="m " style="left:1211.10px;top:994px;font-size:15px;line-height:17px;height:17px;color:#16235e;transform:scaleX(0.8887);">0.00038</span>
<span class="m " style="left:1308.10px;top:994px;font-size:15px;line-height:17px;height:17px;color:#16235e;transform:scaleX(0.8887);">0.00079</span>
<span class="m " style="left:1405.10px;top:994px;font-size:15px;line-height:17px;height:17px;color:#16235e;transform:scaleX(0.8887);">0.39506</span>
<span class="m " style="left:1502.10px;top:994px;font-size:15px;line-height:17px;height:17px;color:#16235e;transform:scaleX(0.8887);">0.39227</span>
<span class="m " style="left:1599.10px;top:994px;font-size:15px;line-height:17px;height:17px;color:#16235e;transform:scaleX(0.8887);">0.00189</span>
<span class="m " style="left:1696.10px;top:994px;font-size:15px;line-height:17px;height:17px;color:#16235e;transform:scaleX(0.8887);">0.0009</span>
<span class="m " style="left:1793.10px;top:994px;font-size:15px;line-height:17px;height:17px;color:#16235e;transform:scaleX(0.8887);">0.43452</span>
<span class="m " style="left:1890.10px;top:994px;font-size:15px;line-height:17px;height:17px;color:#16235e;transform:scaleX(0.8887);">0.43356</span>
<span class="m " style="left:1987.10px;top:994px;font-size:15px;line-height:17px;height:17px;color:#16235e;transform:scaleX(0.8887);">0.00006</span>
<span class="m " style="left:2084.10px;top:994px;font-size:15px;line-height:17px;height:17px;color:#16235e;transform:scaleX(0.8887);">0.0009</span>
<div style="left:72px;top:1088px;width:364px;height:102px;background:#d9d9d9;"></div>
<div style="left:437px;top:1088px;width:163px;height:102px;background:#d9d9d9;"></div>
<div style="left:601px;top:1063px;width:96px;height:24px;background:#d9d9d9;"></div>
<svg style="left:691px;top:1063px" width="6" height="6" viewBox="0 0 6 6"><path d="M0.3 0 H6 V5.7 Z" fill="#ff0000"/></svg>
<div style="left:698px;top:1063px;width:96px;height:24px;background:#d9d9d9;"></div>
<svg style="left:788px;top:1063px" width="6" height="6" viewBox="0 0 6 6"><path d="M0.3 0 H6 V5.7 Z" fill="#ff0000"/></svg>
<div style="left:795px;top:1063px;width:96px;height:24px;background:#d9d9d9;"></div>
<svg style="left:885px;top:1063px" width="6" height="6" viewBox="0 0 6 6"><path d="M0.3 0 H6 V5.7 Z" fill="#ff0000"/></svg>
<div style="left:892px;top:1063px;width:96px;height:24px;background:#d9d9d9;"></div>
<svg style="left:982px;top:1063px" width="6" height="6" viewBox="0 0 6 6"><path d="M0.3 0 H6 V5.7 Z" fill="#ff0000"/></svg>
<div style="left:989px;top:1063px;width:96px;height:24px;background:#d9d9d9;"></div>
<svg style="left:1079px;top:1063px" width="6" height="6" viewBox="0 0 6 6"><path d="M0.3 0 H6 V5.7 Z" fill="#ff0000"/></svg>
<div style="left:1086px;top:1063px;width:96px;height:24px;background:#d9d9d9;"></div>
<svg style="left:1176px;top:1063px" width="6" height="6" viewBox="0 0 6 6"><path d="M0.3 0 H6 V5.7 Z" fill="#ff0000"/></svg>
<div style="left:1183px;top:1063px;width:96px;height:24px;background:#d9d9d9;"></div>
<svg style="left:1273px;top:1063px" width="6" height="6" viewBox="0 0 6 6"><path d="M0.3 0 H6 V5.7 Z" fill="#ff0000"/></svg>
<div style="left:1280px;top:1063px;width:96px;height:24px;background:#d9d9d9;"></div>
<svg style="left:1370px;top:1063px" width="6" height="6" viewBox="0 0 6 6"><path d="M0.3 0 H6 V5.7 Z" fill="#ff0000"/></svg>
<div style="left:1377px;top:1063px;width:96px;height:24px;background:#d9d9d9;"></div>
<svg style="left:1467px;top:1063px" width="6" height="6" viewBox="0 0 6 6"><path d="M0.3 0 H6 V5.7 Z" fill="#ff0000"/></svg>
<div style="left:1474px;top:1063px;width:96px;height:24px;background:#d9d9d9;"></div>
<svg style="left:1564px;top:1063px" width="6" height="6" viewBox="0 0 6 6"><path d="M0.3 0 H6 V5.7 Z" fill="#ff0000"/></svg>
<div style="left:1571px;top:1063px;width:96px;height:24px;background:#d9d9d9;"></div>
<svg style="left:1661px;top:1063px" width="6" height="6" viewBox="0 0 6 6"><path d="M0.3 0 H6 V5.7 Z" fill="#ff0000"/></svg>
<div style="left:1668px;top:1063px;width:96px;height:24px;background:#d9d9d9;"></div>
<svg style="left:1758px;top:1063px" width="6" height="6" viewBox="0 0 6 6"><path d="M0.3 0 H6 V5.7 Z" fill="#ff0000"/></svg>
<div style="left:1765px;top:1063px;width:96px;height:24px;background:#d9d9d9;"></div>
<svg style="left:1855px;top:1063px" width="6" height="6" viewBox="0 0 6 6"><path d="M0.3 0 H6 V5.7 Z" fill="#ff0000"/></svg>
<div style="left:1862px;top:1063px;width:96px;height:24px;background:#d9d9d9;"></div>
<svg style="left:1952px;top:1063px" width="6" height="6" viewBox="0 0 6 6"><path d="M0.3 0 H6 V5.7 Z" fill="#ff0000"/></svg>
<div style="left:1959px;top:1063px;width:96px;height:24px;background:#d9d9d9;"></div>
<svg style="left:2049px;top:1063px" width="6" height="6" viewBox="0 0 6 6"><path d="M0.3 0 H6 V5.7 Z" fill="#ff0000"/></svg>
<div style="left:2056px;top:1063px;width:96px;height:24px;background:#d9d9d9;"></div>
<svg style="left:2146px;top:1063px" width="6" height="6" viewBox="0 0 6 6"><path d="M0.3 0 H6 V5.7 Z" fill="#ff0000"/></svg>
<svg shape-rendering="crispEdges" style="left:600px;top:1088px" width="389" height="18" viewBox="0 0 389 18"><rect x="1" y="0" width="388" height="18" fill="url(#dots)"/></svg>
<svg shape-rendering="crispEdges" style="left:600px;top:1140px" width="389" height="20" viewBox="0 0 389 20"><rect x="1" y="2" width="388" height="18" fill="url(#dots)"/></svg>
<div style="left:600px;top:1044px;width:1541px;height:1px;background:#0d3d5f;"></div>
<div style="left:72px;top:1062px;width:2069px;height:1px;background:#0d3d5f;"></div>
<div style="left:72px;top:1087px;width:2069px;height:1px;background:#0d3d5f;"></div>
<div style="left:437px;top:1105px;width:1704px;height:1px;background:#0d3d5f;"></div>
<div style="left:437px;top:1123px;width:1704px;height:1px;background:#0d3d5f;"></div>
<div style="left:252px;top:1141px;width:1889px;height:1px;background:#0d3d5f;"></div>
<div style="left:437px;top:1159px;width:1704px;height:1px;background:#0d3d5f;"></div>
<div style="left:437px;top:1177px;width:1704px;height:1px;background:#0d3d5f;"></div>
<div style="left:600px;top:1044px;width:1px;height:147px;background:#0d3d5f;"></div>
<div style="left:988px;top:1044px;width:1px;height:147px;background:#0d3d5f;"></div>
<div style="left:1376px;top:1044px;width:1px;height:147px;background:#0d3d5f;"></div>
<div style="left:1764px;top:1044px;width:1px;height:147px;background:#0d3d5f;"></div>
<div style="left:697px;top:1062px;width:1px;height:129px;background:#0d3d5f;"></div>
<div style="left:794px;top:1062px;width:1px;height:129px;background:#0d3d5f;"></div>
<div style="left:891px;top:1062px;width:1px;height:129px;background:#0d3d5f;"></div>
<div style="left:1085px;top:1062px;width:1px;height:129px;background:#0d3d5f;"></div>
<div style="left:1182px;top:1062px;width:1px;height:129px;background:#0d3d5f;"></div>
<div style="left:1279px;top:1062px;width:1px;height:129px;background:#0d3d5f;"></div>
<div style="left:1473px;top:1062px;width:1px;height:129px;background:#0d3d5f;"></div>
<div style="left:1570px;top:1062px;width:1px;height:129px;background:#0d3d5f;"></div>
<div style="left:1667px;top:1062px;width:1px;height:129px;background:#0d3d5f;"></div>
<div style="left:1861px;top:1062px;width:1px;height:129px;background:#0d3d5f;"></div>
<div style="left:1958px;top:1062px;width:1px;height:129px;background:#0d3d5f;"></div>
<div style="left:2055px;top:1062px;width:1px;height:129px;background:#0d3d5f;"></div>
<div style="left:251px;top:1062px;width:1px;height:129px;background:#0d3d5f;"></div>
<div style="left:436px;top:1062px;width:1px;height:129px;background:#0d3d5f;"></div>
<span class="m " style="left:600.00px;top:1048px;font-size:15px;line-height:17px;height:17px;color:#16235e;transform:scaleX(0.8887);width:436.57px;text-align:center;transform-origin:0 0;">0% Laden</span>
<span class="m " style="left:988.00px;top:1048px;font-size:15px;line-height:17px;height:17px;color:#16235e;transform:scaleX(0.8887);width:436.57px;text-align:center;transform-origin:0 0;">50% Laden</span>
<span class="m " style="left:1376.00px;top:1048px;font-size:15px;line-height:17px;height:17px;color:#16235e;transform:scaleX(0.8887);width:436.57px;text-align:center;transform-origin:0 0;">100% Laden</span>
<span class="m " style="left:1764.00px;top:1048px;font-size:15px;line-height:17px;height:17px;color:#16235e;transform:scaleX(0.8887);width:436.57px;text-align:center;transform-origin:0 0;">Average laden</span>
<svg style="left:982px;top:1045px" width="6" height="6" viewBox="0 0 6 6"><path d="M0.3 0 H6 V5.7 Z" fill="#ff0000"/></svg>
<svg style="left:1370px;top:1045px" width="6" height="6" viewBox="0 0 6 6"><path d="M0.3 0 H6 V5.7 Z" fill="#ff0000"/></svg>
<svg style="left:1758px;top:1045px" width="6" height="6" viewBox="0 0 6 6"><path d="M0.3 0 H6 V5.7 Z" fill="#ff0000"/></svg>
<span class="m " style="left:73.30px;top:1073px;font-size:15px;line-height:17px;height:17px;color:#16235e;transform:scaleX(0.8887);">Activity</span>
<span class="m " style="left:253.60px;top:1073px;font-size:15px;line-height:17px;height:17px;color:#16235e;transform:scaleX(0.8887);">Type</span>
<span class="m " style="left:438.60px;top:1073px;font-size:15px;line-height:17px;height:17px;color:#16235e;transform:scaleX(0.8887);">Unit</span>
<span class="m " style="left:602.00px;top:1069px;font-size:15px;line-height:17px;height:17px;color:#16235e;transform:scaleX(0.8887);">kg CO</span>
<span class="m " style="left:642.30px;top:1076px;font-size:9.6px;line-height:11px;height:11px;color:#1f3f7a;transform:scaleX(0.9721);">2</span>
<span class="m " style="left:648.00px;top:1069px;font-size:15px;line-height:17px;height:17px;color:#16235e;transform:scaleX(0.8887);">e</span>
<span class="m " style="left:699.00px;top:1069px;font-size:15px;line-height:17px;height:17px;color:#16235e;transform:scaleX(0.8887);">kg CO</span>
<span class="m " style="left:739.30px;top:1076px;font-size:9.6px;line-height:11px;height:11px;color:#1f3f7a;transform:scaleX(0.9721);">2</span>
<span class="m " style="left:796.00px;top:1069px;font-size:15px;line-height:17px;height:17px;color:#16235e;transform:scaleX(0.8887);">kg CH</span>
<span class="m " style="left:836.30px;top:1076px;font-size:9.6px;line-height:11px;height:11px;color:#1f3f7a;transform:scaleX(0.9721);">4</span>
<span class="m " style="left:893.00px;top:1069px;font-size:15px;line-height:17px;height:17px;color:#16235e;transform:scaleX(0.8887);">kg N</span>
<span class="m " style="left:925.30px;top:1076px;font-size:9.6px;line-height:11px;height:11px;color:#1f3f7a;transform:scaleX(0.9721);">2</span>
<span class="m " style="left:931.00px;top:1069px;font-size:15px;line-height:17px;height:17px;color:#16235e;transform:scaleX(0.8887);">O</span>
<span class="m " style="left:990.00px;top:1069px;font-size:15px;line-height:17px;height:17px;color:#16235e;transform:scaleX(0.8887);">kg CO</span>
<span class="m " style="left:1030.30px;top:1076px;font-size:9.6px;line-height:11px;height:11px;color:#1f3f7a;transform:scaleX(0.9721);">2</span>
<span class="m " style="left:1036.00px;top:1069px;font-size:15px;line-height:17px;height:17px;color:#16235e;transform:scaleX(0.8887);">e</span>
<span class="m " style="left:1087.00px;top:1069px;font-size:15px;line-height:17px;height:17px;color:#16235e;transform:scaleX(0.8887);">kg CO</span>
<span class="m " style="left:1127.30px;top:1076px;font-size:9.6px;line-height:11px;height:11px;color:#1f3f7a;transform:scaleX(0.9721);">2</span>
<span class="m " style="left:1184.00px;top:1069px;font-size:15px;line-height:17px;height:17px;color:#16235e;transform:scaleX(0.8887);">kg CH</span>
<span class="m " style="left:1224.30px;top:1076px;font-size:9.6px;line-height:11px;height:11px;color:#1f3f7a;transform:scaleX(0.9721);">4</span>
<span class="m " style="left:1281.00px;top:1069px;font-size:15px;line-height:17px;height:17px;color:#16235e;transform:scaleX(0.8887);">kg N</span>
<span class="m " style="left:1313.30px;top:1076px;font-size:9.6px;line-height:11px;height:11px;color:#1f3f7a;transform:scaleX(0.9721);">2</span>
<span class="m " style="left:1319.00px;top:1069px;font-size:15px;line-height:17px;height:17px;color:#16235e;transform:scaleX(0.8887);">O</span>
<span class="m " style="left:1378.00px;top:1069px;font-size:15px;line-height:17px;height:17px;color:#16235e;transform:scaleX(0.8887);">kg CO</span>
<span class="m " style="left:1418.30px;top:1076px;font-size:9.6px;line-height:11px;height:11px;color:#1f3f7a;transform:scaleX(0.9721);">2</span>
<span class="m " style="left:1424.00px;top:1069px;font-size:15px;line-height:17px;height:17px;color:#16235e;transform:scaleX(0.8887);">e</span>
<span class="m " style="left:1475.00px;top:1069px;font-size:15px;line-height:17px;height:17px;color:#16235e;transform:scaleX(0.8887);">kg CO</span>
<span class="m " style="left:1515.30px;top:1076px;font-size:9.6px;line-height:11px;height:11px;color:#1f3f7a;transform:scaleX(0.9721);">2</span>
<span class="m " style="left:1572.00px;top:1069px;font-size:15px;line-height:17px;height:17px;color:#16235e;transform:scaleX(0.8887);">kg CH</span>
<span class="m " style="left:1612.30px;top:1076px;font-size:9.6px;line-height:11px;height:11px;color:#1f3f7a;transform:scaleX(0.9721);">4</span>
<span class="m " style="left:1669.00px;top:1069px;font-size:15px;line-height:17px;height:17px;color:#16235e;transform:scaleX(0.8887);">kg N</span>
<span class="m " style="left:1701.30px;top:1076px;font-size:9.6px;line-height:11px;height:11px;color:#1f3f7a;transform:scaleX(0.9721);">2</span>
<span class="m " style="left:1707.00px;top:1069px;font-size:15px;line-height:17px;height:17px;color:#16235e;transform:scaleX(0.8887);">O</span>
<span class="m " style="left:1766.00px;top:1069px;font-size:15px;line-height:17px;height:17px;color:#16235e;transform:scaleX(0.8887);">kg CO</span>
<span class="m " style="left:1806.30px;top:1076px;font-size:9.6px;line-height:11px;height:11px;color:#1f3f7a;transform:scaleX(0.9721);">2</span>
<span class="m " style="left:1812.00px;top:1069px;font-size:15px;line-height:17px;height:17px;color:#16235e;transform:scaleX(0.8887);">e</span>
<span class="m " style="left:1863.00px;top:1069px;font-size:15px;line-height:17px;height:17px;color:#16235e;transform:scaleX(0.8887);">kg CO</span>
<span class="m " style="left:1903.30px;top:1076px;font-size:9.6px;line-height:11px;height:11px;color:#1f3f7a;transform:scaleX(0.9721);">2</span>
<span class="m " style="left:1960.00px;top:1069px;font-size:15px;line-height:17px;height:17px;color:#16235e;transform:scaleX(0.8887);">kg CH</span>
<span class="m " style="left:2000.30px;top:1076px;font-size:9.6px;line-height:11px;height:11px;color:#1f3f7a;transform:scaleX(0.9721);">4</span>
<span class="m " style="left:2057.00px;top:1069px;font-size:15px;line-height:17px;height:17px;color:#16235e;transform:scaleX(0.8887);">kg N</span>
<span class="m " style="left:2089.30px;top:1076px;font-size:9.6px;line-height:11px;height:11px;color:#1f3f7a;transform:scaleX(0.9721);">2</span>
<span class="m " style="left:2095.00px;top:1069px;font-size:15px;line-height:17px;height:17px;color:#16235e;transform:scaleX(0.8887);">O</span>
<svg style="left:245px;top:1088px" width="6" height="6" viewBox="0 0 6 6"><path d="M0.3 0 H6 V5.7 Z" fill="#ff0000"/></svg>
<span class="m " style="left:253.60px;top:1100px;font-size:15px;line-height:17px;height:17px;color:#16235e;transform:scaleX(0.8887);">Rigid (&gt;3.5 - 7.5</span>
<span class="m " style="left:253.60px;top:1118px;font-size:15px;line-height:17px;height:17px;color:#16235e;transform:scaleX(0.8887);">tonnes)</span>
<span class="m " style="left:253.60px;top:1154px;font-size:15px;line-height:17px;height:17px;color:#16235e;transform:scaleX(0.8887);">Rigid (&gt;7.5 tonnes-17</span>
<span class="m " style="left:253.60px;top:1172px;font-size:15px;line-height:17px;height:17px;color:#16235e;transform:scaleX(0.8887);">tonnes)</span>
<span class="m " style="left:438.60px;top:1091px;font-size:15px;line-height:17px;height:17px;color:#16235e;transform:scaleX(0.8887);">tonne.km</span>
<svg style="left:594px;top:1088px" width="6" height="6" viewBox="0 0 6 6"><path d="M0.3 0 H6 V5.7 Z" fill="#ff0000"/></svg>
<span class="m " style="left:1017.10px;top:1091px;font-size:15px;line-height:17px;height:17px;color:#16235e;transform:scaleX(0.8887);">0.45065</span>
<span class="m " style="left:1114.10px;top:1091px;font-size:15px;line-height:17px;height:17px;color:#16235e;transform:scaleX(0.8887);">0.44498</span>
<span class="m " style="left:1211.10px;top:1091px;font-size:15px;line-height:17px;height:17px;color:#16235e;transform:scaleX(0.8887);">0.00009</span>
<span class="m " style="left:1308.10px;top:1091px;font-size:15px;line-height:17px;height:17px;color:#16235e;transform:scaleX(0.8887);">0.00557</span>
<span class="m " style="left:1405.10px;top:1091px;font-size:15px;line-height:17px;height:17px;color:#16235e;transform:scaleX(0.8887);">0.24312</span>
<span class="m " style="left:1502.10px;top:1091px;font-size:15px;line-height:17px;height:17px;color:#16235e;transform:scaleX(0.8887);">0.24029</span>
<span class="m " style="left:1599.10px;top:1091px;font-size:15px;line-height:17px;height:17px;color:#16235e;transform:scaleX(0.8887);">0.00005</span>
<span class="m " style="left:1696.10px;top:1091px;font-size:15px;line-height:17px;height:17px;color:#16235e;transform:scaleX(0.8887);">0.00279</span>
<span class="m " style="left:1793.10px;top:1091px;font-size:15px;line-height:17px;height:17px;color:#16235e;transform:scaleX(0.8887);">0.48674</span>
<span class="m " style="left:1890.10px;top:1091px;font-size:15px;line-height:17px;height:17px;color:#16235e;transform:scaleX(0.8887);">0.48058</span>
<span class="m " style="left:1987.10px;top:1091px;font-size:15px;line-height:17px;height:17px;color:#16235e;transform:scaleX(0.8887);">0.00010</span>
<span class="m " style="left:2084.10px;top:1091px;font-size:15px;line-height:17px;height:17px;color:#16235e;transform:scaleX(0.8887);">0.00605</span>
<span class="m " style="left:438.60px;top:1109px;font-size:15px;line-height:17px;height:17px;color:#16235e;transform:scaleX(0.8887);">km</span>
<span class="m " style="left:629.10px;top:1109px;font-size:15px;line-height:17px;height:17px;color:#16235e;transform:scaleX(0.8887);">0.44543</span>
<span class="m " style="left:726.10px;top:1109px;font-size:15px;line-height:17px;height:17px;color:#16235e;transform:scaleX(0.8887);">0.43935</span>
<span class="m " style="left:823.10px;top:1109px;font-size:15px;line-height:17px;height:17px;color:#16235e;transform:scaleX(0.8887);">0.00010</span>
<span class="m " style="left:920.10px;top:1109px;font-size:15px;line-height:17px;height:17px;color:#16235e;transform:scaleX(0.8887);">0.00598</span>
<span class="m " style="left:1017.10px;top:1109px;font-size:15px;line-height:17px;height:17px;color:#16235e;transform:scaleX(0.8887);">0.48364</span>
<span class="m " style="left:1114.10px;top:1109px;font-size:15px;line-height:17px;height:17px;color:#16235e;transform:scaleX(0.8887);">0.47756</span>
<span class="m " style="left:1211.10px;top:1109px;font-size:15px;line-height:17px;height:17px;color:#16235e;transform:scaleX(0.8887);">0.00010</span>
<span class="m " style="left:1308.10px;top:1109px;font-size:15px;line-height:17px;height:17px;color:#16235e;transform:scaleX(0.8887);">0.00598</span>
<span class="m " style="left:1405.10px;top:1109px;font-size:15px;line-height:17px;height:17px;color:#16235e;transform:scaleX(0.8887);">0.52184</span>
<span class="m " style="left:1502.10px;top:1109px;font-size:15px;line-height:17px;height:17px;color:#16235e;transform:scaleX(0.8887);">0.51576</span>
<span class="m " style="left:1599.10px;top:1109px;font-size:15px;line-height:17px;height:17px;color:#16235e;transform:scaleX(0.8887);">0.00010</span>
<span class="m " style="left:1696.10px;top:1109px;font-size:15px;line-height:17px;height:17px;color:#16235e;transform:scaleX(0.8887);">0.00598</span>
<span class="m " style="left:1793.10px;top:1109px;font-size:15px;line-height:17px;height:17px;color:#16235e;transform:scaleX(0.8887);">0.48058</span>
<span class="m " style="left:1890.10px;top:1109px;font-size:15px;line-height:17px;height:17px;color:#16235e;transform:scaleX(0.8887);">0.47450</span>
<span class="m " style="left:1987.10px;top:1109px;font-size:15px;line-height:17px;height:17px;color:#16235e;transform:scaleX(0.8887);">0.00010</span>
<span class="m " style="left:2084.10px;top:1109px;font-size:15px;line-height:17px;height:17px;color:#16235e;transform:scaleX(0.8887);">0.00598</span>
<span class="m " style="left:438.60px;top:1127px;font-size:15px;line-height:17px;height:17px;color:#16235e;transform:scaleX(0.8887);">miles</span>
<span class="m " style="left:629.10px;top:1127px;font-size:15px;line-height:17px;height:17px;color:#16235e;transform:scaleX(0.8887);">0.71686</span>
<span class="m " style="left:726.10px;top:1127px;font-size:15px;line-height:17px;height:17px;color:#16235e;transform:scaleX(0.8887);">0.70707</span>
<span class="m " style="left:823.10px;top:1127px;font-size:15px;line-height:17px;height:17px;color:#16235e;transform:scaleX(0.8887);">0.00016</span>
<span class="m " style="left:920.10px;top:1127px;font-size:15px;line-height:17px;height:17px;color:#16235e;transform:scaleX(0.8887);">0.00962</span>
<span class="m " style="left:1017.10px;top:1127px;font-size:15px;line-height:17px;height:17px;color:#16235e;transform:scaleX(0.8887);">0.77834</span>
<span class="m " style="left:1114.10px;top:1127px;font-size:15px;line-height:17px;height:17px;color:#16235e;transform:scaleX(0.8887);">0.76856</span>
<span class="m " style="left:1211.10px;top:1127px;font-size:15px;line-height:17px;height:17px;color:#16235e;transform:scaleX(0.8887);">0.00016</span>
<span class="m " style="left:1308.10px;top:1127px;font-size:15px;line-height:17px;height:17px;color:#16235e;transform:scaleX(0.8887);">0.00962</span>
<span class="m " style="left:1405.10px;top:1127px;font-size:15px;line-height:17px;height:17px;color:#16235e;transform:scaleX(0.8887);">0.83983</span>
<span class="m " style="left:1502.10px;top:1127px;font-size:15px;line-height:17px;height:17px;color:#16235e;transform:scaleX(0.8887);">0.83004</span>
<span class="m " style="left:1599.10px;top:1127px;font-size:15px;line-height:17px;height:17px;color:#16235e;transform:scaleX(0.8887);">0.00016</span>
<span class="m " style="left:1696.10px;top:1127px;font-size:15px;line-height:17px;height:17px;color:#16235e;transform:scaleX(0.8887);">0.00962</span>
<span class="m " style="left:1793.10px;top:1127px;font-size:15px;line-height:17px;height:17px;color:#16235e;transform:scaleX(0.8887);">0.77342</span>
<span class="m " style="left:1890.10px;top:1127px;font-size:15px;line-height:17px;height:17px;color:#16235e;transform:scaleX(0.8887);">0.76364</span>
<span class="m " style="left:1987.10px;top:1127px;font-size:15px;line-height:17px;height:17px;color:#16235e;transform:scaleX(0.8887);">0.00016</span>
<span class="m " style="left:2084.10px;top:1127px;font-size:15px;line-height:17px;height:17px;color:#16235e;transform:scaleX(0.8887);">0.00962</span>
<span class="m " style="left:438.60px;top:1145px;font-size:15px;line-height:17px;height:17px;color:#16235e;transform:scaleX(0.8887);">tonne.km</span>
<svg style="left:594px;top:1142px" width="6" height="6" viewBox="0 0 6 6"><path d="M0.3 0 H6 V5.7 Z" fill="#ff0000"/></svg>
<span class="m " style="left:1017.10px;top:1145px;font-size:15px;line-height:17px;height:17px;color:#16235e;transform:scaleX(0.8887);">0.24072</span>
<span class="m " style="left:1114.10px;top:1145px;font-size:15px;line-height:17px;height:17px;color:#16235e;transform:scaleX(0.8887);">0.23780</span>
<span class="m " style="left:1211.10px;top:1145px;font-size:15px;line-height:17px;height:17px;color:#16235e;transform:scaleX(0.8887);">0.00005</span>
<span class="m " style="left:1308.10px;top:1145px;font-size:15px;line-height:17px;height:17px;color:#16235e;transform:scaleX(0.8887);">0.00287</span>
<span class="m " style="left:1405.10px;top:1145px;font-size:15px;line-height:17px;height:17px;color:#16235e;transform:scaleX(0.8887);">0.13522</span>
<span class="m " style="left:1502.10px;top:1145px;font-size:15px;line-height:17px;height:17px;color:#16235e;transform:scaleX(0.8887);">0.13376</span>
<span class="m " style="left:1599.10px;top:1145px;font-size:15px;line-height:17px;height:17px;color:#16235e;transform:scaleX(0.8887);">0.00002</span>
<span class="m " style="left:1696.10px;top:1145px;font-size:15px;line-height:17px;height:17px;color:#16235e;transform:scaleX(0.8887);">0.00144</span>
<span class="m " style="left:1793.10px;top:1145px;font-size:15px;line-height:17px;height:17px;color:#16235e;transform:scaleX(0.8887);">0.34002</span>
<span class="m " style="left:1890.10px;top:1145px;font-size:15px;line-height:17px;height:17px;color:#16235e;transform:scaleX(0.8887);">0.33572</span>
<span class="m " style="left:1987.10px;top:1145px;font-size:15px;line-height:17px;height:17px;color:#16235e;transform:scaleX(0.8887);">0.00007</span>
<span class="m " style="left:2084.10px;top:1145px;font-size:15px;line-height:17px;height:17px;color:#16235e;transform:scaleX(0.8887);">0.00422</span>
<span class="m " style="left:438.60px;top:1163px;font-size:15px;line-height:17px;height:17px;color:#16235e;transform:scaleX(0.8887);">km</span>
<span class="m " style="left:629.10px;top:1163px;font-size:15px;line-height:17px;height:17px;color:#16235e;transform:scaleX(0.8887);">0.53561</span>
<span class="m " style="left:726.10px;top:1163px;font-size:15px;line-height:17px;height:17px;color:#16235e;transform:scaleX(0.8887);">0.52820</span>
<span class="m " style="left:823.10px;top:1163px;font-size:15px;line-height:17px;height:17px;color:#16235e;transform:scaleX(0.8887);">0.00012</span>
<span class="m " style="left:920.10px;top:1163px;font-size:15px;line-height:17px;height:17px;color:#16235e;transform:scaleX(0.8887);">0.00729</span>
<span class="m " style="left:1017.10px;top:1163px;font-size:15px;line-height:17px;height:17px;color:#16235e;transform:scaleX(0.8887);">0.61107</span>
<span class="m " style="left:1114.10px;top:1163px;font-size:15px;line-height:17px;height:17px;color:#16235e;transform:scaleX(0.8887);">0.60365</span>
<span class="m " style="left:1211.10px;top:1163px;font-size:15px;line-height:17px;height:17px;color:#16235e;transform:scaleX(0.8887);">0.00012</span>
<span class="m " style="left:1308.10px;top:1163px;font-size:15px;line-height:17px;height:17px;color:#16235e;transform:scaleX(0.8887);">0.00729</span>
<span class="m " style="left:1405.10px;top:1163px;font-size:15px;line-height:17px;height:17px;color:#16235e;transform:scaleX(0.8887);">0.68653</span>
<span class="m " style="left:1502.10px;top:1163px;font-size:15px;line-height:17px;height:17px;color:#16235e;transform:scaleX(0.8887);">0.67911</span>
<span class="m " style="left:1599.10px;top:1163px;font-size:15px;line-height:17px;height:17px;color:#16235e;transform:scaleX(0.8887);">0.00012</span>
<span class="m " style="left:1696.10px;top:1163px;font-size:15px;line-height:17px;height:17px;color:#16235e;transform:scaleX(0.8887);">0.00729</span>
<span class="m " style="left:1793.10px;top:1163px;font-size:15px;line-height:17px;height:17px;color:#16235e;transform:scaleX(0.8887);">0.58692</span>
<span class="m " style="left:1890.10px;top:1163px;font-size:15px;line-height:17px;height:17px;color:#16235e;transform:scaleX(0.8887);">0.57951</span>
<span class="m " style="left:1987.10px;top:1163px;font-size:15px;line-height:17px;height:17px;color:#16235e;transform:scaleX(0.8887);">0.00012</span>
<span class="m " style="left:2084.10px;top:1163px;font-size:15px;line-height:17px;height:17px;color:#16235e;transform:scaleX(0.8887);">0.00729</span>
<span class="m " style="left:438.60px;top:1181px;font-size:15px;line-height:17px;height:17px;color:#16235e;transform:scaleX(0.8887);">miles</span>
<span class="m " style="left:629.10px;top:1181px;font-size:15px;line-height:17px;height:17px;color:#16235e;transform:scaleX(0.8887);">0.86198</span>
<span class="m " style="left:726.10px;top:1181px;font-size:15px;line-height:17px;height:17px;color:#16235e;transform:scaleX(0.8887);">0.85005</span>
<span class="m " style="left:823.10px;top:1181px;font-size:15px;line-height:17px;height:17px;color:#16235e;transform:scaleX(0.8887);">0.00020</span>
<span class="m " style="left:920.10px;top:1181px;font-size:15px;line-height:17px;height:17px;color:#16235e;transform:scaleX(0.8887);">0.01173</span>
<span class="m " style="left:1017.10px;top:1181px;font-size:15px;line-height:17px;height:17px;color:#16235e;transform:scaleX(0.8887);">0.98342</span>
<span class="m " style="left:1114.10px;top:1181px;font-size:15px;line-height:17px;height:17px;color:#16235e;transform:scaleX(0.8887);">0.97149</span>
<span class="m " style="left:1211.10px;top:1181px;font-size:15px;line-height:17px;height:17px;color:#16235e;transform:scaleX(0.8887);">0.00020</span>
<span class="m " style="left:1308.10px;top:1181px;font-size:15px;line-height:17px;height:17px;color:#16235e;transform:scaleX(0.8887);">0.01173</span>
<span class="m " style="left:1405.10px;top:1181px;font-size:15px;line-height:17px;height:17px;color:#16235e;transform:scaleX(0.8887);">1.10486</span>
<span class="m " style="left:1502.10px;top:1181px;font-size:15px;line-height:17px;height:17px;color:#16235e;transform:scaleX(0.8887);">1.09292</span>
<span class="m " style="left:1599.10px;top:1181px;font-size:15px;line-height:17px;height:17px;color:#16235e;transform:scaleX(0.8887);">0.00020</span>
<span class="m " style="left:1696.10px;top:1181px;font-size:15px;line-height:17px;height:17px;color:#16235e;transform:scaleX(0.8887);">0.01173</span>
<span class="m " style="left:1793.10px;top:1181px;font-size:15px;line-height:17px;height:17px;color:#16235e;transform:scaleX(0.8887);">0.94456</span>
<span class="m " style="left:1890.10px;top:1181px;font-size:15px;line-height:17px;height:17px;color:#16235e;transform:scaleX(0.8887);">0.93263</span>
<span class="m " style="left:1987.10px;top:1181px;font-size:15px;line-height:17px;height:17px;color:#16235e;transform:scaleX(0.8887);">0.00020</span>
<span class="m " style="left:2084.10px;top:1181px;font-size:15px;line-height:17px;height:17px;color:#16235e;transform:scaleX(0.8887);">0.01173</span>
<div style="left:69px;top:265px;width:1406px;height:3px;background:#119c6b;"></div>
<div style="left:69px;top:309px;width:1402px;height:3px;background:#119c6b;"></div>
<div style="left:69px;top:265px;width:3px;height:47px;background:#119c6b;"></div>
<div style="left:1472px;top:265px;width:3px;height:42px;background:#119c6b;"></div>
<div style="left:1471px;top:308px;width:5px;height:5px;background:#119c6b;"></div>
<div style="left:70px;top:20px;width:2px;height:1168px;background:#c6c6c6;"></div>
<div style="left:0px;top:99px;width:2141px;height:2px;background:#c6c6c6;"></div>
<div style="left:0px;top:40px;width:31px;height:1150px;background:#eeeeee;"></div>
<div style="left:31px;top:40px;width:1px;height:1150px;background:#d0d0d0;"></div>
<div style="left:0px;top:54px;width:31px;height:1px;background:#d6d6d6;"></div>
<span class="s" style="left:0.00px;top:40px;font-size:13.3px;line-height:15px;height:15px;color:#3c3c3c;width:31.00px;text-align:center;">1</span>
<div style="left:0px;top:81px;width:31px;height:1px;background:#d6d6d6;"></div>
<span class="s" style="left:0.00px;top:61px;font-size:13.3px;line-height:15px;height:15px;color:#3c3c3c;width:31.00px;text-align:center;">2</span>
<span class="s" style="left:0.00px;top:83px;font-size:13.3px;line-height:15px;height:15px;color:#3c3c3c;width:31.00px;text-align:center;">3</span>
<div style="left:0px;top:109px;width:31px;height:1px;background:#d6d6d6;"></div>
<span class="s" style="left:0.00px;top:98px;font-size:13.3px;line-height:15px;height:15px;color:#3c3c3c;width:31.00px;text-align:center;">4</span>
<div style="left:0px;top:142px;width:31px;height:1px;background:#d6d6d6;"></div>
<span class="s" style="left:0.00px;top:119px;font-size:13.3px;line-height:15px;height:15px;color:#3c3c3c;width:31.00px;text-align:center;">5</span>
<div style="left:0px;top:161px;width:31px;height:1px;background:#d6d6d6;"></div>
<span class="s" style="left:0.00px;top:145px;font-size:13.3px;line-height:15px;height:15px;color:#3c3c3c;width:31.00px;text-align:center;">6</span>
<div style="left:0px;top:181px;width:31px;height:1px;background:#d6d6d6;"></div>
<span class="s" style="left:0.00px;top:164px;font-size:13.3px;line-height:15px;height:15px;color:#3c3c3c;width:31.00px;text-align:center;">7</span>
<div style="left:0px;top:227px;width:31px;height:1px;background:#d6d6d6;"></div>
<span class="s" style="left:0.00px;top:197px;font-size:13.3px;line-height:15px;height:15px;color:#3c3c3c;width:31.00px;text-align:center;">8</span>
<div style="left:0px;top:246px;width:31px;height:1px;background:#d6d6d6;"></div>
<span class="s" style="left:0.00px;top:230px;font-size:13.3px;line-height:15px;height:15px;color:#3c3c3c;width:31.00px;text-align:center;">9</span>
<div style="left:0px;top:265px;width:31px;height:1px;background:#d6d6d6;"></div>
<span class="s" style="left:0.00px;top:249px;font-size:13.3px;line-height:15px;height:15px;color:#3c3c3c;width:31.00px;text-align:center;">10</span>
<div style="left:0px;top:266px;width:30px;height:44px;background:#dcdcdc;"></div>
<div style="left:30px;top:265px;width:2px;height:46px;background:#119c6b;"></div>
<div style="left:0px;top:310px;width:31px;height:1px;background:#d6d6d6;"></div>
<span class="s" style="left:0.00px;top:281px;font-size:13.3px;line-height:15px;height:15px;color:#137f6e;width:31.00px;text-align:center;">11</span>
<div style="left:0px;top:336px;width:31px;height:1px;background:#d6d6d6;"></div>
<span class="s" style="left:0.00px;top:316px;font-size:13.3px;line-height:15px;height:15px;color:#3c3c3c;width:31.00px;text-align:center;">12</span>
<div style="left:0px;top:363px;width:31px;height:1px;background:#d6d6d6;"></div>
<span class="s" style="left:0.00px;top:343px;font-size:13.3px;line-height:15px;height:15px;color:#3c3c3c;width:31.00px;text-align:center;">13</span>
<div style="left:0px;top:448px;width:31px;height:1px;background:#d6d6d6;"></div>
<span class="s" style="left:0.00px;top:399px;font-size:13.3px;line-height:15px;height:15px;color:#3c3c3c;width:31.00px;text-align:center;">14</span>
<div style="left:0px;top:484px;width:31px;height:1px;background:#d6d6d6;"></div>
<span class="s" style="left:0.00px;top:459px;font-size:13.3px;line-height:15px;height:15px;color:#3c3c3c;width:31.00px;text-align:center;">15</span>
<div style="left:0px;top:513px;width:31px;height:1px;background:#d6d6d6;"></div>
<span class="s" style="left:0.00px;top:492px;font-size:13.3px;line-height:15px;height:15px;color:#3c3c3c;width:31.00px;text-align:center;">16</span>
<div style="left:0px;top:535px;width:31px;height:1px;background:#d6d6d6;"></div>
<span class="s" style="left:0.00px;top:517px;font-size:13.3px;line-height:15px;height:15px;color:#3c3c3c;width:31.00px;text-align:center;">17</span>
<div style="left:0px;top:562px;width:31px;height:1px;background:#d6d6d6;"></div>
<span class="s" style="left:0.00px;top:542px;font-size:13.3px;line-height:15px;height:15px;color:#3c3c3c;width:31.00px;text-align:center;">18</span>
<div style="left:0px;top:625px;width:31px;height:1px;background:#d6d6d6;"></div>
<span class="s" style="left:0.00px;top:587px;font-size:13.3px;line-height:15px;height:15px;color:#3c3c3c;width:31.00px;text-align:center;">19</span>
<div style="left:0px;top:673px;width:31px;height:1px;background:#d6d6d6;"></div>
<span class="s" style="left:0.00px;top:642px;font-size:13.3px;line-height:15px;height:15px;color:#3c3c3c;width:31.00px;text-align:center;">20</span>
<div style="left:0px;top:715px;width:31px;height:1px;background:#d6d6d6;"></div>
<span class="s" style="left:0.00px;top:687px;font-size:13.3px;line-height:15px;height:15px;color:#3c3c3c;width:31.00px;text-align:center;">21</span>
<div style="left:0px;top:729px;width:31px;height:1px;background:#d6d6d6;"></div>
<span class="s" style="left:0.00px;top:716px;font-size:13.3px;line-height:15px;height:15px;color:#3c3c3c;width:31.00px;text-align:center;">22</span>
<div style="left:0px;top:747px;width:31px;height:1px;background:#d6d6d6;"></div>
<span class="s" style="left:0.00px;top:731px;font-size:13.3px;line-height:15px;height:15px;color:#3c3c3c;width:31.00px;text-align:center;">23</span>
<div style="left:0px;top:767px;width:31px;height:1px;background:#d6d6d6;"></div>
<span class="s" style="left:0.00px;top:750px;font-size:13.3px;line-height:15px;height:15px;color:#3c3c3c;width:31.00px;text-align:center;">24</span>
<div style="left:0px;top:792px;width:31px;height:1px;background:#d6d6d6;"></div>
<span class="s" style="left:0.00px;top:773px;font-size:13.3px;line-height:15px;height:15px;color:#3c3c3c;width:31.00px;text-align:center;">25</span>
<div style="left:0px;top:810px;width:31px;height:1px;background:#d6d6d6;"></div>
<span class="s" style="left:0.00px;top:794px;font-size:13.3px;line-height:15px;height:15px;color:#3c3c3c;width:31.00px;text-align:center;">26</span>
<div style="left:0px;top:828px;width:31px;height:1px;background:#d6d6d6;"></div>
<span class="s" style="left:0.00px;top:812px;font-size:13.3px;line-height:15px;height:15px;color:#3c3c3c;width:31.00px;text-align:center;">27</span>
<div style="left:0px;top:846px;width:31px;height:1px;background:#d6d6d6;"></div>
<span class="s" style="left:0.00px;top:830px;font-size:13.3px;line-height:15px;height:15px;color:#3c3c3c;width:31.00px;text-align:center;">28</span>
<div style="left:0px;top:864px;width:31px;height:1px;background:#d6d6d6;"></div>
<span class="s" style="left:0.00px;top:848px;font-size:13.3px;line-height:15px;height:15px;color:#3c3c3c;width:31.00px;text-align:center;">29</span>
<div style="left:0px;top:882px;width:31px;height:1px;background:#d6d6d6;"></div>
<span class="s" style="left:0.00px;top:866px;font-size:13.3px;line-height:15px;height:15px;color:#3c3c3c;width:31.00px;text-align:center;">30</span>
<div style="left:0px;top:900px;width:31px;height:1px;background:#d6d6d6;"></div>
<span class="s" style="left:0.00px;top:884px;font-size:13.3px;line-height:15px;height:15px;color:#3c3c3c;width:31.00px;text-align:center;">31</span>
<div style="left:0px;top:918px;width:31px;height:1px;background:#d6d6d6;"></div>
<span class="s" style="left:0.00px;top:902px;font-size:13.3px;line-height:15px;height:15px;color:#3c3c3c;width:31.00px;text-align:center;">32</span>
<div style="left:0px;top:936px;width:31px;height:1px;background:#d6d6d6;"></div>
<span class="s" style="left:0.00px;top:920px;font-size:13.3px;line-height:15px;height:15px;color:#3c3c3c;width:31.00px;text-align:center;">33</span>
<div style="left:0px;top:954px;width:31px;height:1px;background:#d6d6d6;"></div>
<span class="s" style="left:0.00px;top:938px;font-size:13.3px;line-height:15px;height:15px;color:#3c3c3c;width:31.00px;text-align:center;">34</span>
<div style="left:0px;top:972px;width:31px;height:1px;background:#d6d6d6;"></div>
<span class="s" style="left:0.00px;top:956px;font-size:13.3px;line-height:15px;height:15px;color:#3c3c3c;width:31.00px;text-align:center;">35</span>
<div style="left:0px;top:990px;width:31px;height:1px;background:#d6d6d6;"></div>
<span class="s" style="left:0.00px;top:974px;font-size:13.3px;line-height:15px;height:15px;color:#3c3c3c;width:31.00px;text-align:center;">36</span>
<div style="left:0px;top:1008px;width:31px;height:1px;background:#d6d6d6;"></div>
<span class="s" style="left:0.00px;top:992px;font-size:13.3px;line-height:15px;height:15px;color:#3c3c3c;width:31.00px;text-align:center;">37</span>
<div style="left:0px;top:1026px;width:31px;height:1px;background:#d6d6d6;"></div>
<span class="s" style="left:0.00px;top:1010px;font-size:13.3px;line-height:15px;height:15px;color:#3c3c3c;width:31.00px;text-align:center;">38</span>
<div style="left:0px;top:1044px;width:31px;height:1px;background:#d6d6d6;"></div>
<span class="s" style="left:0.00px;top:1028px;font-size:13.3px;line-height:15px;height:15px;color:#3c3c3c;width:31.00px;text-align:center;">39</span>
<div style="left:0px;top:1062px;width:31px;height:1px;background:#d6d6d6;"></div>
<span class="s" style="left:0.00px;top:1046px;font-size:13.3px;line-height:15px;height:15px;color:#3c3c3c;width:31.00px;text-align:center;">40</span>
<div style="left:0px;top:1087px;width:31px;height:1px;background:#d6d6d6;"></div>
<span class="s" style="left:0.00px;top:1068px;font-size:13.3px;line-height:15px;height:15px;color:#3c3c3c;width:31.00px;text-align:center;">41</span>
<div style="left:0px;top:1105px;width:31px;height:1px;background:#d6d6d6;"></div>
<span class="s" style="left:0.00px;top:1089px;font-size:13.3px;line-height:15px;height:15px;color:#3c3c3c;width:31.00px;text-align:center;">42</span>
<div style="left:0px;top:1123px;width:31px;height:1px;background:#d6d6d6;"></div>
<span class="s" style="left:0.00px;top:1107px;font-size:13.3px;line-height:15px;height:15px;color:#3c3c3c;width:31.00px;text-align:center;">43</span>
<div style="left:0px;top:1141px;width:31px;height:1px;background:#d6d6d6;"></div>
<span class="s" style="left:0.00px;top:1125px;font-size:13.3px;line-height:15px;height:15px;color:#3c3c3c;width:31.00px;text-align:center;">44</span>
<div style="left:0px;top:1159px;width:31px;height:1px;background:#d6d6d6;"></div>
<span class="s" style="left:0.00px;top:1143px;font-size:13.3px;line-height:15px;height:15px;color:#3c3c3c;width:31.00px;text-align:center;">45</span>
<div style="left:0px;top:1177px;width:31px;height:1px;background:#d6d6d6;"></div>
<span class="s" style="left:0.00px;top:1161px;font-size:13.3px;line-height:15px;height:15px;color:#3c3c3c;width:31.00px;text-align:center;">46</span>
<div style="left:0px;top:1195px;width:31px;height:1px;background:#d6d6d6;"></div>
<span class="s" style="left:0.00px;top:1179px;font-size:13.3px;line-height:15px;height:15px;color:#3c3c3c;width:31.00px;text-align:center;">47</span>
<div style="left:0px;top:99px;width:32px;height:2px;background:#c6c6c6;"></div>
<div style="left:0px;top:20px;width:2141px;height:20px;background:#eeeeee;"></div>
<div style="left:72px;top:20px;width:1402px;height:19px;background:#dcdcdc;"></div>
<div style="left:72px;top:39px;width:1402px;height:2px;background:#119c6b;"></div>
<div style="left:70px;top:20px;width:2px;height:21px;background:#c6c6c6;"></div>
<span class="s" style="left:32.00px;top:23px;font-size:13.3px;line-height:15px;height:15px;color:#3c3c3c;width:38.00px;text-align:center;">A</span>
<span class="s" style="left:71.00px;top:23px;font-size:13.3px;line-height:15px;height:15px;color:#137f6e;width:180.00px;text-align:center;">B</span>
<span class="s" style="left:252.00px;top:23px;font-size:13.3px;line-height:15px;height:15px;color:#137f6e;width:184.00px;text-align:center;">C</span>
<span class="s" style="left:437.00px;top:23px;font-size:13.3px;line-height:15px;height:15px;color:#137f6e;width:163.00px;text-align:center;">D</span>
<span class="s" style="left:601.00px;top:23px;font-size:13.3px;line-height:15px;height:15px;color:#137f6e;width:96.00px;text-align:center;">E</span>
<span class="s" style="left:698.00px;top:23px;font-size:13.3px;line-height:15px;height:15px;color:#137f6e;width:96.00px;text-align:center;">F</span>
<span class="s" style="left:795.00px;top:23px;font-size:13.3px;line-height:15px;height:15px;color:#137f6e;width:96.00px;text-align:center;">G</span>
<span class="s" style="left:892.00px;top:23px;font-size:13.3px;line-height:15px;height:15px;color:#137f6e;width:96.00px;text-align:center;">H</span>
<span class="s" style="left:989.00px;top:23px;font-size:13.3px;line-height:15px;height:15px;color:#137f6e;width:96.00px;text-align:center;">I</span>
<span class="s" style="left:1086.00px;top:23px;font-size:13.3px;line-height:15px;height:15px;color:#137f6e;width:96.00px;text-align:center;">J</span>
<span class="s" style="left:1183.00px;top:23px;font-size:13.3px;line-height:15px;height:15px;color:#137f6e;width:96.00px;text-align:center;">K</span>
<span class="s" style="left:1280.00px;top:23px;font-size:13.3px;line-height:15px;height:15px;color:#137f6e;width:96.00px;text-align:center;">L</span>
<span class="s" style="left:1377.00px;top:23px;font-size:13.3px;line-height:15px;height:15px;color:#137f6e;width:96.00px;text-align:center;">M</span>
<span class="s" style="left:1474.00px;top:23px;font-size:13.3px;line-height:15px;height:15px;color:#3c3c3c;width:96.00px;text-align:center;">N</span>
<span class="s" style="left:1571.00px;top:23px;font-size:13.3px;line-height:15px;height:15px;color:#3c3c3c;width:96.00px;text-align:center;">O</span>
<span class="s" style="left:1668.00px;top:23px;font-size:13.3px;line-height:15px;height:15px;color:#3c3c3c;width:96.00px;text-align:center;">P</span>
<span class="s" style="left:1765.00px;top:23px;font-size:13.3px;line-height:15px;height:15px;color:#3c3c3c;width:96.00px;text-align:center;">Q</span>
<span class="s" style="left:1862.00px;top:23px;font-size:13.3px;line-height:15px;height:15px;color:#3c3c3c;width:96.00px;text-align:center;">R</span>
<span class="s" style="left:1959.00px;top:23px;font-size:13.3px;line-height:15px;height:15px;color:#3c3c3c;width:96.00px;text-align:center;">S</span>
<span class="s" style="left:2056.00px;top:23px;font-size:13.3px;line-height:15px;height:15px;color:#3c3c3c;width:96.00px;text-align:center;">T</span>
<div style="left:1473px;top:20px;width:1px;height:21px;background:#d6d6d6;"></div>
<div style="left:1570px;top:20px;width:1px;height:21px;background:#d6d6d6;"></div>
<div style="left:1667px;top:20px;width:1px;height:21px;background:#d6d6d6;"></div>
<div style="left:1764px;top:20px;width:1px;height:21px;background:#d6d6d6;"></div>
<div style="left:1861px;top:20px;width:1px;height:21px;background:#d6d6d6;"></div>
<div style="left:1958px;top:20px;width:1px;height:21px;background:#d6d6d6;"></div>
<div style="left:2055px;top:20px;width:1px;height:21px;background:#d6d6d6;"></div>
<div style="left:1474px;top:40px;width:667px;height:1px;background:#d6d6d6;"></div>
<div style="left:32px;top:40px;width:38px;height:1px;background:#d6d6d6;"></div>
<svg style="left:13px;top:27px" width="8" height="8" viewBox="0 0 8 8"><path d="M7 1 V7 H1 Z" fill="#7d7d7d"/></svg>
<div style="left:0px;top:0px;width:2141px;height:20px;background:#eeeeee;"></div>
<div style="left:0;top:0;width:24px;height:20px;background:linear-gradient(90deg,#e8ecf1,#eeeeee)"></div>
<div style="left:12px;top:-10px;width:242px;height:20.5px;background:#fff;border:1px solid #d5d7da;border-radius:5px;box-sizing:content-box"></div>
<div style="left:264px;top:-10px;width:1900px;height:20.5px;background:#fff;border:1px solid #d5d7da;border-radius:5px;box-sizing:content-box"></div>
<span class="m " style="left:113.00px;top:-8px;font-size:13.5px;line-height:15px;height:15px;color:#222;transform:scaleX(0.9875);">B11</span>
<svg style="left:240px;top:0px" width="8" height="4" viewBox="0 0 8 4"><path d="M1 -2 L4 1.5 L7 -2" stroke="#555" stroke-width="1.3" fill="none"/></svg>
<svg style="left:286px;top:-8px" width="20" height="16" viewBox="0 0 20 16"><circle cx="9.5" cy="5.5" r="5" stroke="#444" stroke-width="1.3" fill="none"/><path d="M13.2 9.3 L17 13.4" stroke="#444" stroke-width="1.4"/></svg>
<span class="s" style="left:318.5px;top:-11.5px;font-family:'Liberation Serif',serif;font-style:italic;font-size:18px;line-height:18px;color:#333">fx</span>
<div style="left:346px;top:0px;width:1px;height:7px;background:#cfcfcf;"></div>
<svg style="left:355px;top:-10px" width="14" height="14" viewBox="0 0 14 14"><circle cx="7" cy="7" r="6" fill="#111"/></svg>
<span class="m " style="left:385.50px;top:-9px;font-size:15px;line-height:17px;height:17px;color:#000;transform:scaleX(0.8887);">Where possible users should report on litres of fuel and/or kWh of electricity used for freight rather than on a km basis as this is a more accurate calculation - these conversion factors may be found in the ’Fuels’ and ’UK Electricity’ tabs.</span>
<div style="left:0;top:1188px;width:2141px;height:32px;background:linear-gradient(90deg,#e2e6f0 0%,#e4e7ef 35%,#ebebee 78%,#ececee 100%)"></div>
<div style="left:102px;top:1188px;width:150.5px;height:24px;background:#f5b183;border-radius:0 0 6px 6px"></div>
<span class="s" style="left:118.50px;top:1193px;font-size:13px;line-height:15px;height:15px;color:#2b2b2b;">Business travel- land</span>
<div style="left:254px;top:1188px;width:210px;height:24px;background:#f5b183;border-radius:0 0 6px 6px"></div>
<span class="s" style="left:271.90px;top:1193px;font-size:13px;line-height:15px;height:15px;color:#2b2b2b;">WTT- pass vehs &amp; travel- land</span>
<div style="left:465.5px;top:1188px;width:128.0px;height:24px;background:#fff;border-radius:0 0 6px 6px"></div>
<span class="s" style="left:477.50px;top:1193px;font-size:13px;line-height:15px;height:15px;color:#0f7465;font-weight:bold;">Freighting goods</span>
<div style="left:470px;top:1211px;width:119px;height:1.5px;background:#f5b183;"></div>
<div style="left:595px;top:1188px;width:202.5px;height:24px;background:#f5b183;border-radius:0 0 6px 6px"></div>
<span class="s" style="left:614.60px;top:1193px;font-size:13px;line-height:15px;height:15px;color:#2b2b2b;">WTT- delivery vehs &amp; freight</span>
<div style="left:799px;top:1188px;width:85.5px;height:24px;background:#f5b183;border-radius:0 0 6px 6px"></div>
<span class="s" style="left:814.50px;top:1193px;font-size:13px;line-height:15px;height:15px;color:#2b2b2b;">Hotel stay</span>
<div style="left:886px;top:1188px;width:190px;height:24px;background:#f5b183;border-radius:0 0 6px 6px"></div>
<span class="s" style="left:902.40px;top:1193px;font-size:13px;line-height:15px;height:15px;color:#2b2b2b;">Managed assets- electricity</span>
<div style="left:1077.5px;top:1188px;width:178.5px;height:24px;background:#f5b183;border-radius:0 0 6px 6px"></div>
<span class="s" style="left:1092.60px;top:1193px;font-size:13px;line-height:15px;height:15px;color:#2b2b2b;">Managed assets- vehicles</span>
<div style="left:1256.5px;top:1188px;width:134.0px;height:24px;background:#dcdcdc;border-radius:0 0 6px 6px"></div>
<span class="s" style="left:1271.40px;top:1193px;font-size:13px;line-height:15px;height:15px;color:#2b2b2b;">Outside of scopes</span>
<div style="left:1391px;top:1188px;width:99px;height:24px;background:#dcdcdc;border-radius:0 0 6px 6px"></div>
<span class="s" style="left:1405.30px;top:1193px;font-size:13px;line-height:15px;height:15px;color:#2b2b2b;">Conversions</span>
<div style="left:1491px;top:1188px;width:115.5px;height:24px;background:#dcdcdc;border-radius:0 0 6px 6px"></div>
<span class="s" style="left:1505.50px;top:1193px;font-size:13px;line-height:15px;height:15px;color:#2b2b2b;">Fuel properties</span>
<svg style="left:10px;top:1192px" width="90" height="18" viewBox="0 0 90 18" fill="none" stroke-width="1.9"><path d="M6 4.6 V13.6" stroke="#222"/><path d="M13.3 5 L9 9.1 L13.3 13.2" stroke="#222"/><path d="M32.6 5 L28.3 9.1 L32.6 13.2" stroke="#222"/><path d="M52 5 L56.3 9.1 L52 13.2" stroke="#9a9a9a"/><path d="M70.6 5 L74.9 9.1 L70.6 13.2" stroke="#9a9a9a"/><path d="M78.3 4.6 V13.6" stroke="#9a9a9a"/></svg>
<svg style="left:1615px;top:1192px" width="45" height="18" viewBox="0 0 45 18"><circle cx="3.5" cy="9.5" r="1" fill="#333"/><circle cx="8" cy="9.5" r="1" fill="#333"/><circle cx="12.5" cy="9.5" r="1" fill="#333"/><path d="M33 4.5 V14.5 M28 9.5 H38" stroke="#222" stroke-width="1.6"/></svg>
<div style="left:1737px;top:1198px;width:1px;height:7px;background:#b5b5b5;"></div>
<svg style="left:1751px;top:1197px" width="8" height="8" viewBox="0 0 8 8"><path d="M6 0.8 V7.2 L1 4 Z" fill="#8a8a8a"/></svg>
<div style="left:1766px;top:1197px;width:120px;height:8px;border-radius:4px;background:#c9c9c9"></div>
<div style="left:0px;top:1214px;width:2141px;height:1px;background:#cdced2;"></div>
<div style="left:2056px;top:1219px;width:15px;height:1px;background:#333;"></div>
<div style="left:44px;top:1219px;width:1px;height:1px;background:#666;"></div>
<div style="left:115px;top:1218px;width:2px;height:2px;background:#555;"></div>
<div style="left:119px;top:1218px;width:2px;height:2px;background:#555;"></div>
<div style="left:2129px;top:1219px;width:2px;height:1px;background:#333;"></div>
</div></body></html>
